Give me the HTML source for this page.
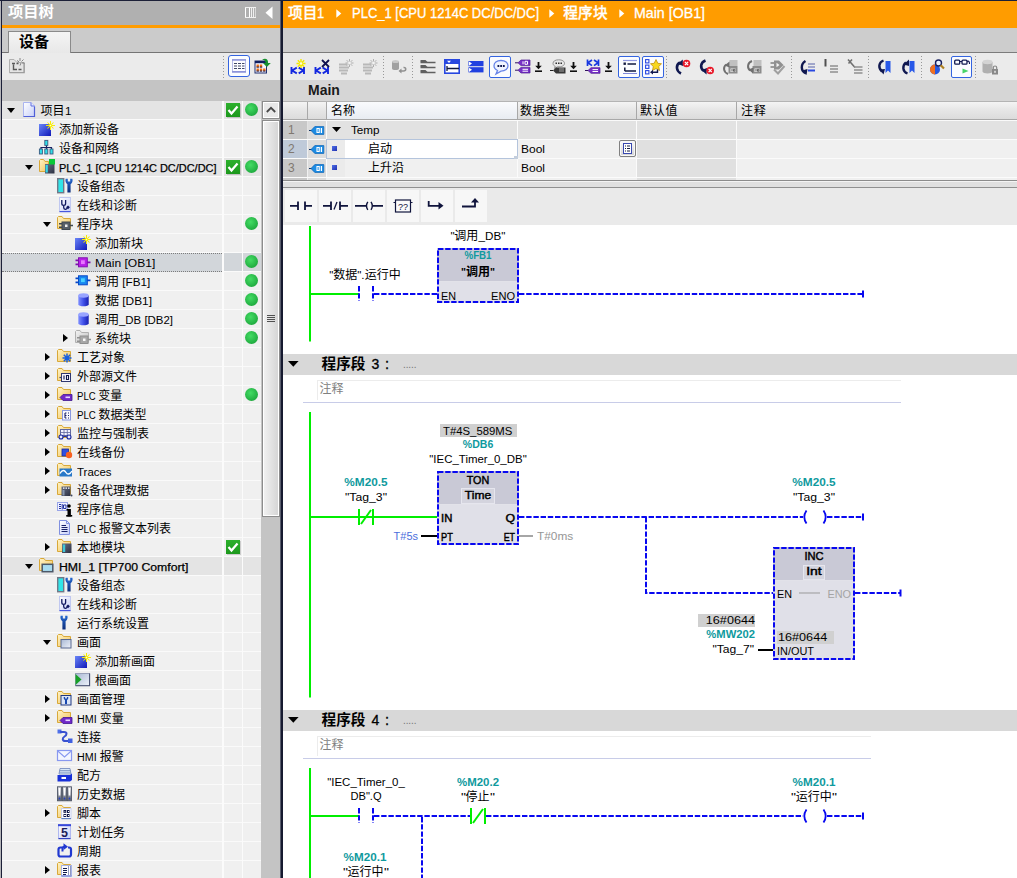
<!DOCTYPE html><html lang="zh"><head><meta charset="utf-8"><title>TIA Portal</title><style>
*{box-sizing:border-box;margin:0;padding:0}
html,body{width:1017px;height:878px;overflow:hidden;background:#fff}
body{position:relative;font-family:"Liberation Sans","Noto Sans CJK SC",sans-serif;font-size:12px;color:#000;line-height:1}
.a{position:absolute}
.t{position:absolute;white-space:nowrap}
.row{position:absolute;left:2px;width:260px;height:19px;border-bottom:1px solid #fafafa;background:#f0f0f0}
.row.dev{background:#e4e4e4}
.row .lbl{position:absolute;top:0.500px;line-height:18px;white-space:nowrap;font-size:12px}
.arr{position:absolute;width:0;height:0}
.arr.d{border-left:4px solid transparent;border-right:4px solid transparent;border-top:5px solid #000}
.arr.r{border-top:4px solid transparent;border-bottom:4px solid transparent;border-left:5px solid #000}
.chk{position:absolute;left:224px;top:2px;width:14px;height:14px;background:linear-gradient(#2cb02c,#1c981c);box-shadow:1px 1px 0 rgba(0,0,0,.15)}
.dot{position:absolute;left:243px;top:2px;width:13px;height:13px;border-radius:50%;background:radial-gradient(circle at 42% 38%,#44dc64,#26b446 60%,#189a34)}
.teal{color:#0f9a9e;font-weight:bold}
.c{transform:translateX(-50%)}
</style></head><body>
<div class="a" style="left:0;top:0;width:283px;height:878px;background:#f0f0f0"></div>
<div class="a" style="left:0;top:0;width:281px;height:25px;background:#b0b0b0"></div>
<div class="a" style="left:0;top:25px;width:281px;height:3px;background:#ff9c00"></div>
<div class="a" style="left:0;top:28px;width:281px;height:25px;background:#cbcbcb;border-bottom:1px solid #747474"></div>
<div class="a" style="left:8px;top:31px;width:63px;height:22px;background:linear-gradient(#f4f4f4,#e8e8e8);border:1px solid #8a8a8a;border-bottom:none"></div>
<div class="t" style="left:19px;top:33px;font-size:15px;font-weight:bold;line-height:18px">设备</div>
<div class="t" style="left:8px;top:3px;font-size:15.300px;font-weight:bold;color:#fff;line-height:18px">项目树</div>
<div class="a" style="left:0;top:53px;width:281px;height:27px;background:#ebebeb"></div>
<div class="a" style="left:0;top:80px;width:281px;height:21px;background:#c4c4c4"></div>
<svg width="0" height="0" style="position:absolute"><defs>
<linearGradient id="gF" x1="0" y1="0" x2="1" y2="1"><stop offset="0" stop-color="#fff4c8"/><stop offset="1" stop-color="#f2c45c"/></linearGradient>
<linearGradient id="gG" x1="0" y1="0" x2="1" y2="1"><stop offset="0" stop-color="#f4f4f4"/><stop offset="1" stop-color="#c0c0c0"/></linearGradient>
<linearGradient id="gB" x1="0" y1="0" x2="1" y2="1"><stop offset="0" stop-color="#6a86f8"/><stop offset="1" stop-color="#1018b8"/></linearGradient>
<linearGradient id="gP" x1="0" y1="0" x2="1" y2="1"><stop offset="0" stop-color="#ffffff"/><stop offset="1" stop-color="#c8d0f8"/></linearGradient>
<linearGradient id="gC" x1="0" y1="0" x2="1" y2="0"><stop offset="0" stop-color="#8090ff"/><stop offset="0.5" stop-color="#4050e8"/><stop offset="1" stop-color="#1820b0"/></linearGradient>
<linearGradient id="gD" x1="0" y1="0" x2="1" y2="1"><stop offset="0" stop-color="#687088"/><stop offset="1" stop-color="#2c3040"/></linearGradient>
<linearGradient id="gW" x1="0" y1="0" x2="0" y2="1"><stop offset="0" stop-color="#2468d0"/><stop offset="1" stop-color="#0c2c78"/></linearGradient>
<linearGradient id="gS" x1="0" y1="0" x2="1" y2="1"><stop offset="0" stop-color="#a8b8d4"/><stop offset="1" stop-color="#eef2fa"/></linearGradient>
<linearGradient id="gH" x1="0" y1="0" x2="0" y2="1"><stop offset="0" stop-color="#d8d8e0"/><stop offset="1" stop-color="#586070"/></linearGradient>
</defs></svg>
<div class="row dev" style="top:101px;">
<i class="arr d" style="left:5px;top:7px"></i>
<span class="a" style="left:21px;top:1px;width:16px;height:16px"><svg width="16" height="16" viewBox="0 0 16 16" style="overflow:visible;display:block"><path d="M0.5 0.5 H8 L11.5 4 V14.5 H0.5 Z" fill="url(#gP)" stroke="#aab4f0" stroke-width="1"/><path d="M0.5 14.5 H11.5 V4.5" fill="none" stroke="#5060d8" stroke-width="1.2"/><path d="M8 0.5 V4 H11.5" fill="#e8ecff" stroke="#6070e0" stroke-width="1"/></svg></span>
<span class="lbl" style="left:38.5px">项目<span style="display:inline-block;width:6.48px;font-size:11.22px"><span style="display:inline-block;white-space:pre;transform:scaleX(1.0375);transform-origin:0 0">1</span></span></span>
<span class="chk"><svg width="14" height="14" viewBox="0 0 14 14"><path d="M2.5 7 L5.5 10.5 L11.5 3.5" fill="none" stroke="#fff" stroke-width="2.2"/></svg></span>
<span class="dot"></span>
</div>
<div class="row" style="top:120px;">
<span class="a" style="left:37px;top:1px;width:16px;height:16px"><svg width="16" height="16" viewBox="0 0 16 16" style="overflow:visible;display:block"><rect x="0" y="3" width="12" height="12" fill="url(#gB)"/><g stroke="#f8ec00" stroke-width="1.05"><path d="M11.5 0 V9 M7 4.5 H16 M8.500 1.500 L14.500 7.500 M14.500 1.500 L8.500 7.500"/></g><circle cx="11.5" cy="4.5" r="0.800" fill="#ffffc0"/></svg></span>
<span class="lbl" style="left:57px">添加新设备</span>
</div>
<div class="row" style="top:139px;">
<span class="a" style="left:37px;top:1px;width:16px;height:16px"><svg width="16" height="16" viewBox="0 0 16 16" style="overflow:visible;display:block"><path d="M7.5 5 V9 M2 9 V7.5 H12.5 V9" fill="none" stroke="#182060" stroke-width="1.2"/><rect x="5.8" y="0.4" width="3" height="5" fill="#30e0e8" stroke="#3a5a80" stroke-width="0.9"/><rect x="0.4" y="9" width="3" height="5" fill="#30e0e8" stroke="#3a5a80" stroke-width="0.9"/><rect x="5.8" y="9" width="3" height="5" fill="#30e0e8" stroke="#3a5a80" stroke-width="0.9"/><rect x="11" y="9" width="3" height="5" fill="#30e0e8" stroke="#3a5a80" stroke-width="0.9"/></svg></span>
<span class="lbl" style="left:57px">设备和网络</span>
</div>
<div class="row dev" style="top:158px;">
<i class="arr d" style="left:23px;top:7px"></i>
<span class="a" style="left:37px;top:1px;width:16px;height:16px"><svg width="16" height="16" viewBox="0 0 16 16" style="overflow:visible;display:block"><path d="M0.5 1.5 L1.5 0.5 H4.5 L6 2.5 H9.5 V12.5 H0.5 Z" fill="url(#gF)" stroke="#d8a838"/><rect x="6" y="5" width="9.5" height="9.5" fill="url(#gD)"/><rect x="6.6" y="6" width="2.2" height="7.5" fill="#38d8e8"/><rect x="10" y="0" width="6" height="5.5" fill="#08c838"/></svg></span>
<span class="lbl" style="left:57px;-webkit-text-stroke:0.250px #000"><span style="display:inline-block;width:157.50px;font-size:11.22px"><span style="display:inline-block;white-space:pre;transform:scaleX(0.9753);transform-origin:0 0">PLC_1 [CPU 1214C DC/DC/DC]</span></span></span>
<span class="chk"><svg width="14" height="14" viewBox="0 0 14 14"><path d="M2.5 7 L5.5 10.5 L11.5 3.5" fill="none" stroke="#fff" stroke-width="2.2"/></svg></span>
<span class="dot"></span>
</div>
<div class="row" style="top:177px;">
<span class="a" style="left:55px;top:1px;width:16px;height:16px"><svg width="16" height="16" viewBox="0 0 16 16" style="overflow:visible;display:block"><rect x="0.700" y="0.700" width="6" height="14" fill="#30e4e8" stroke="#707888" stroke-width="1.400"/><path d="M8.6 0.800 h2.200 v2.600 h2.400 v-2.600 h2.200 c0.600 2.200 -0.200 4.400 -1.800 5.400 V14.600 h-3.200 V6.200 c-1.600 -1 -2.400 -3.200 -1.800 -5.400 Z" fill="url(#gW)"/></svg></span>
<span class="lbl" style="left:75px">设备组态</span>
</div>
<div class="row" style="top:196px;">
<span class="a" style="left:55px;top:1px;width:16px;height:16px"><svg width="16" height="16" viewBox="0 0 16 16" style="overflow:visible;display:block"><rect x="2.500" y="0.500" width="11" height="14" fill="url(#gP)" stroke="#c0c8f0"/><path d="M2.500 14.600 H13.500" stroke="#4858e0" stroke-width="1.200"/><path d="M4.800 3 V6.500 C4.800 9 8.600 9 8.600 6.500 V3 M6.700 8.500 V10.500 C6.700 12.800 9.500 12.800 10.200 11" fill="none" stroke="#101860" stroke-width="1.300"/><path d="M11 8.400 L12.900 10.300 L11 12.200 L9.100 10.300 Z" fill="#101860"/></svg></span>
<span class="lbl" style="left:75px">在线和诊断</span>
</div>
<div class="row" style="top:215px;">
<i class="arr d" style="left:41px;top:7px"></i>
<span class="a" style="left:55px;top:1px;width:16px;height:16px"><svg width="16" height="16" viewBox="0 0 16 16" style="overflow:visible;display:block"><g transform="translate(0,-1)"><path d="M0.5 2.5 L1.5 1.5 H5 L6.5 3.5 H13.5 V13.5 H0.5 Z" fill="url(#gF)" stroke="#d8a838" stroke-width="1"/><path d="M2 8.7 H6 M2 12.3 H6 M12 10.5 H16" stroke="#404850" stroke-width="1.5"/><rect x="5" y="7" width="8" height="7.5" fill="#586068" stroke="#404850"/><rect x="8" y="9.5" width="2.5" height="2.5" fill="#f0f0f0"/></g></svg></span>
<span class="lbl" style="left:75px">程序块</span>
<span class="dot"></span>
</div>
<div class="row" style="top:234px;">
<span class="a" style="left:73px;top:1px;width:16px;height:16px"><svg width="16" height="16" viewBox="0 0 16 16" style="overflow:visible;display:block"><rect x="0" y="3" width="12" height="12" fill="url(#gB)"/><g stroke="#f8ec00" stroke-width="1.05"><path d="M11.5 0 V9 M7 4.5 H16 M8.500 1.500 L14.500 7.500 M14.500 1.500 L8.500 7.500"/></g><circle cx="11.5" cy="4.5" r="0.800" fill="#ffffc0"/></svg></span>
<span class="lbl" style="left:93px">添加新块</span>
</div>
<div class="row" style="top:253px;">
<span class="a" style="left:0;top:0;width:222px;height:19px;background:#d2d6da;border-top:1px dotted #7c7c7c;border-bottom:1px dotted #7c7c7c;border-right:1px dotted #7c7c7c"></span>
<span class="a" style="left:222px;top:0;width:38px;height:18px;background:#d2d6da"></span>
<span class="a" style="left:73px;top:1px;width:16px;height:16px"><svg width="16" height="16" viewBox="0 0 16 16" style="overflow:visible;display:block"><path d="M0.5 6.300 H4 M0.5 10.300 H4 M12 8.300 H15.500" stroke="#8010b0" stroke-width="1.700"/><rect x="3.500" y="3.800" width="8.800" height="9" fill="#b820e8" stroke="#8010b0" stroke-width="1"/><rect x="6" y="6.300" width="3.800" height="3.800" fill="#e878ff"/></svg></span>
<span class="lbl" style="left:93px"><span style="display:inline-block;width:60.30px;font-size:11.22px"><span style="display:inline-block;white-space:pre;transform:scaleX(1.0744);transform-origin:0 0">Main [OB1]</span></span></span>
<span class="dot"></span>
</div>
<div class="row" style="top:272px;">
<span class="a" style="left:73px;top:1px;width:16px;height:16px"><svg width="16" height="16" viewBox="0 0 16 16" style="overflow:visible;display:block"><g transform="translate(0,-1)"><path d="M0.5 6.300 H4 M0.5 10.300 H4 M12 8.300 H15.500" stroke="#0848c8" stroke-width="1.700"/><rect x="3.500" y="3.800" width="8.800" height="9" fill="#1888f0" stroke="#0848c8" stroke-width="1"/><rect x="6" y="6.300" width="3.800" height="3.800" fill="#48d0ff"/></g></svg></span>
<span class="lbl" style="left:93px">调用<span style="display:inline-block;width:31.28px;font-size:11.22px"><span style="display:inline-block;white-space:pre;transform:scaleX(1.0450);transform-origin:0 0"> [FB1]</span></span></span>
<span class="dot"></span>
</div>
<div class="row" style="top:291px;">
<span class="a" style="left:73px;top:1px;width:16px;height:16px"><svg width="16" height="16" viewBox="0 0 16 16" style="overflow:visible;display:block"><path d="M3.300 3.500 V12.300 C3.300 15 13.700 15 13.700 12.300 V3.500 Z" fill="url(#gC)"/><ellipse cx="8.500" cy="3.500" rx="5.200" ry="2.200" fill="#98a4ff"/></svg></span>
<span class="lbl" style="left:93px">数据<span style="display:inline-block;width:32.98px;font-size:11.22px"><span style="display:inline-block;white-space:pre;transform:scaleX(1.0576);transform-origin:0 0"> [DB1]</span></span></span>
<span class="dot"></span>
</div>
<div class="row" style="top:310px;">
<span class="a" style="left:73px;top:1px;width:16px;height:16px"><svg width="16" height="16" viewBox="0 0 16 16" style="overflow:visible;display:block"><path d="M3.300 3.500 V12.300 C3.300 15 13.700 15 13.700 12.300 V3.500 Z" fill="url(#gC)"/><ellipse cx="8.500" cy="3.500" rx="5.200" ry="2.200" fill="#98a4ff"/></svg></span>
<span class="lbl" style="left:93px">调用<span style="display:inline-block;width:53.98px;font-size:11.22px"><span style="display:inline-block;white-space:pre;transform:scaleX(1.0186);transform-origin:0 0">_DB [DB2]</span></span></span>
<span class="dot"></span>
</div>
<div class="row" style="top:329px;">
<i class="arr r" style="left:61px;top:5px"></i>
<span class="a" style="left:73px;top:1px;width:16px;height:16px"><svg width="16" height="16" viewBox="0 0 16 16" style="overflow:visible;display:block"><g transform="translate(0,-1)"><path d="M0.5 2.5 L1.5 1.5 H5 L6.5 3.5 H13.5 V13.5 H0.5 Z" fill="url(#gG)" stroke="#b0b0b0" stroke-width="1"/><path d="M2 8.7 H6 M2 12.3 H6 M12 10.5 H16" stroke="#909090" stroke-width="1.5"/><rect x="5" y="7" width="8" height="7.5" fill="#a8a8a8" stroke="#909090"/><rect x="8" y="9.5" width="2.5" height="2.5" fill="#f8f8f8"/></g></svg></span>
<span class="lbl" style="left:93px">系统块</span>
<span class="dot"></span>
</div>
<div class="row" style="top:348px;">
<i class="arr r" style="left:43px;top:5px"></i>
<span class="a" style="left:55px;top:1px;width:16px;height:16px"><svg width="16" height="16" viewBox="0 0 16 16" style="overflow:visible;display:block"><g transform="translate(0,-1)"><path d="M0.5 2.5 L1.5 1.5 H5 L6.5 3.5 H13.5 V13.5 H0.5 Z" fill="url(#gF)" stroke="#d8a838" stroke-width="1"/><g stroke="#1860e0" stroke-width="1.5"><path d="M10 5.5 V14.5 M5.5 10 H14.5 M6.8 6.8 L13.2 13.2 M13.2 6.8 L6.8 13.2"/></g></g></svg></span>
<span class="lbl" style="left:75px">工艺对象</span>
</div>
<div class="row" style="top:367px;">
<i class="arr r" style="left:43px;top:5px"></i>
<span class="a" style="left:55px;top:1px;width:16px;height:16px"><svg width="16" height="16" viewBox="0 0 16 16" style="overflow:visible;display:block"><g transform="translate(0,-1)"><path d="M0.5 2.5 L1.5 1.5 H5 L6.5 3.5 H13.5 V13.5 H0.5 Z" fill="url(#gF)" stroke="#d8a838" stroke-width="1"/><path d="M2.5 10.5 H5" stroke="#303870" stroke-width="1.2"/><rect x="4.5" y="6.5" width="9" height="8" fill="#f4f4ff" stroke="#303870"/><path d="M7 8.5 V12.5 M9.5 8.5 H11.5 V12.5 H9.5 Z" fill="none" stroke="#101848" stroke-width="1.1"/></g></svg></span>
<span class="lbl" style="left:75px">外部源文件</span>
</div>
<div class="row" style="top:386px;">
<i class="arr r" style="left:43px;top:5px"></i>
<span class="a" style="left:55px;top:1px;width:16px;height:16px"><svg width="16" height="16" viewBox="0 0 16 16" style="overflow:visible;display:block"><g transform="translate(0,-1)"><path d="M0.5 2.5 L1.5 1.5 H5 L6.5 3.5 H13.5 V13.5 H0.5 Z" fill="url(#gF)" stroke="#d8a838" stroke-width="1"/><path d="M3 11.5 L6 8.5 H15 V14.5 H6 Z" fill="#7028c8" stroke="#401890" stroke-width="0.8"/><rect x="8.5" y="10.5" width="4.5" height="1.6" fill="#e8d8ff"/></g></svg></span>
<span class="lbl" style="left:75px"><span style="display:inline-block;width:21.28px;font-size:11.22px"><span style="display:inline-block;white-space:pre;transform:scaleX(0.8530);transform-origin:0 0">PLC </span></span>变量</span>
<span class="dot"></span>
</div>
<div class="row" style="top:405px;">
<i class="arr r" style="left:43px;top:5px"></i>
<span class="a" style="left:55px;top:1px;width:16px;height:16px"><svg width="16" height="16" viewBox="0 0 16 16" style="overflow:visible;display:block"><g transform="translate(0,-1)"><path d="M0.5 2.5 L1.5 1.5 H5 L6.5 3.5 H13.5 V13.5 H0.5 Z" fill="url(#gF)" stroke="#d8a838" stroke-width="1"/><rect x="5.5" y="5.5" width="8" height="9.5" fill="#f8f8ff" stroke="#8898e0"/><path d="M8 8 V13 M8 8 H9.5 M8 10.5 H9.5 M8 13 H9.5 M11 8 H12 M11 10.5 H12 M11 13 H12" stroke="#182068" stroke-width="1.1" fill="none"/></g></svg></span>
<span class="lbl" style="left:75px"><span style="display:inline-block;width:21.58px;font-size:11.22px"><span style="display:inline-block;white-space:pre;transform:scaleX(0.8650);transform-origin:0 0">PLC </span></span>数据类型</span>
</div>
<div class="row" style="top:424px;">
<i class="arr r" style="left:43px;top:5px"></i>
<span class="a" style="left:55px;top:1px;width:16px;height:16px"><svg width="16" height="16" viewBox="0 0 16 16" style="overflow:visible;display:block"><g transform="translate(0,-1)"><path d="M0.5 2.5 L1.5 1.5 H5 L6.5 3.5 H13.5 V13.5 H0.5 Z" fill="url(#gF)" stroke="#d8a838" stroke-width="1"/><rect x="3.5" y="5.5" width="10" height="6" fill="#f4f4ff" stroke="#6068a0"/><path d="M3.5 8.5 H13.5 M7 5.5 V11.5 M10.3 5.5 V11.5" stroke="#6068a0" stroke-width="0.8"/><circle cx="4" cy="13" r="2" fill="#e8ecff" stroke="#1828a0" stroke-width="1.1"/><circle cx="12" cy="13" r="2" fill="#e8ecff" stroke="#1828a0" stroke-width="1.1"/><path d="M6 13 Q8 11.5 10 13" stroke="#1828a0" fill="none"/></g></svg></span>
<span class="lbl" style="left:75px">监控与强制表</span>
</div>
<div class="row" style="top:443px;">
<i class="arr r" style="left:43px;top:5px"></i>
<span class="a" style="left:55px;top:1px;width:16px;height:16px"><svg width="16" height="16" viewBox="0 0 16 16" style="overflow:visible;display:block"><g transform="translate(0,-1)"><path d="M0.5 2.5 L1.5 1.5 H5 L6.5 3.5 H13.5 V13.5 H0.5 Z" fill="url(#gF)" stroke="#d8a838" stroke-width="1"/><rect x="5" y="6" width="6.5" height="7" fill="#3050e0" stroke="#1828a0" stroke-width="0.8"/><circle cx="12" cy="12" r="3.2" fill="#f86020"/></g></svg></span>
<span class="lbl" style="left:75px">在线备份</span>
</div>
<div class="row" style="top:462px;">
<i class="arr r" style="left:43px;top:5px"></i>
<span class="a" style="left:55px;top:1px;width:16px;height:16px"><svg width="16" height="16" viewBox="0 0 16 16" style="overflow:visible;display:block"><g transform="translate(0,-1)"><path d="M0.5 2.5 L1.5 1.5 H5 L6.5 3.5 H13.5 V13.5 H0.5 Z" fill="url(#gF)" stroke="#d8a838" stroke-width="1"/><rect x="2.5" y="6.5" width="12.5" height="8" fill="#2878c8"/><path d="M3 11.5 C5 7.5 7.5 8 9 10.5 S13 12.5 15 9" fill="none" stroke="#fff" stroke-width="1.4"/></g></svg></span>
<span class="lbl" style="left:75px"><span style="display:inline-block;width:34.60px;font-size:11.22px"><span style="display:inline-block;white-space:pre;transform:scaleX(1.0214);transform-origin:0 0">Traces</span></span></span>
</div>
<div class="row" style="top:481px;">
<i class="arr r" style="left:43px;top:5px"></i>
<span class="a" style="left:55px;top:1px;width:16px;height:16px"><svg width="16" height="16" viewBox="0 0 16 16" style="overflow:visible;display:block"><g transform="translate(0,-1)"><path d="M0.5 2.5 L1.5 1.5 H5 L6.5 3.5 H13.5 V13.5 H0.5 Z" fill="url(#gF)" stroke="#d8a838" stroke-width="1"/><rect x="4.5" y="5.5" width="9" height="9.5" fill="url(#gD)"/><path d="M6 7.2 H7.5 M8.5 7.2 H10 M11 7.2 H12.5" stroke="#fff" stroke-width="1.2"/><rect x="5.5" y="9" width="2" height="5.5" fill="#8898b0"/><circle cx="14.5" cy="14.5" r="1" fill="#404860"/></g></svg></span>
<span class="lbl" style="left:75px">设备代理数据</span>
</div>
<div class="row" style="top:500px;">
<span class="a" style="left:55px;top:1px;width:16px;height:16px"><svg width="16" height="16" viewBox="0 0 16 16" style="overflow:visible;display:block"><rect x="0.5" y="1.5" width="10" height="8" fill="#f0f2ff" stroke="#98a4e8"/><path d="M2 3.5 H4 M2 5.5 H4 M2 7.5 H4 M5.2 3 V8.5 M6.5 4 H9 V7.5 H6.5 Z" stroke="#2030a0" stroke-width="1" fill="none"/><rect x="10.5" y="8" width="3.4" height="7.5" fill="#000"/><rect x="9.5" y="8" width="2" height="1.5" fill="#000"/><rect x="9.2" y="14" width="6" height="1.6" fill="#000"/><circle cx="12" cy="5" r="1.8" fill="#000"/></svg></span>
<span class="lbl" style="left:75px">程序信息</span>
</div>
<div class="row" style="top:519px;">
<span class="a" style="left:55px;top:1px;width:16px;height:16px"><svg width="16" height="16" viewBox="0 0 16 16" style="overflow:visible;display:block"><path d="M2.5 0.5 H9.5 L12.5 3.5 V14.5 H2.5 Z" fill="url(#gP)" stroke="#8090e0"/><path d="M9.5 0.5 V3.5 H12.5" fill="none" stroke="#8090e0"/><path d="M4.5 5.5 H9 M4.5 7.5 H10.5 M4.5 9.5 H10.5 M4.5 11.5 H10.5" stroke="#182068" stroke-width="1.1"/></svg></span>
<span class="lbl" style="left:75px"><span style="display:inline-block;width:21.98px;font-size:11.22px"><span style="display:inline-block;white-space:pre;transform:scaleX(0.8810);transform-origin:0 0">PLC </span></span>报警文本列表</span>
</div>
<div class="row" style="top:538px;">
<i class="arr r" style="left:43px;top:5px"></i>
<span class="a" style="left:55px;top:1px;width:16px;height:16px"><svg width="16" height="16" viewBox="0 0 16 16" style="overflow:visible;display:block"><g transform="translate(0,-1)"><path d="M0.5 2.5 L1.5 1.5 H5 L6.5 3.5 H13.5 V13.5 H0.5 Z" fill="url(#gF)" stroke="#d8a838" stroke-width="1"/><rect x="5" y="5.5" width="9.5" height="9.5" fill="url(#gD)"/><rect x="5.8" y="6.5" width="2.4" height="7.5" fill="#40c8d8"/></g></svg></span>
<span class="lbl" style="left:75px">本地模块</span>
<span class="chk"><svg width="14" height="14" viewBox="0 0 14 14"><path d="M2.5 7 L5.5 10.5 L11.5 3.5" fill="none" stroke="#fff" stroke-width="2.2"/></svg></span>
</div>
<div class="row dev" style="top:557px;">
<i class="arr d" style="left:23px;top:7px"></i>
<span class="a" style="left:37px;top:1px;width:16px;height:16px"><svg width="16" height="16" viewBox="0 0 16 16" style="overflow:visible;display:block"><g transform="translate(0,-1)"><path d="M0.500 2.500 L1.500 1.500 H5 L6.500 3.500 H13.500 V13.500 H0.500 Z" fill="url(#gF)" stroke="#d8a838"/><rect x="3.200" y="7.300" width="10.600" height="7.400" fill="#a8dcf0" stroke="#4c5868" stroke-width="1.500"/></g></svg></span>
<span class="lbl" style="left:57px;-webkit-text-stroke:0.250px #000"><span style="display:inline-block;width:129.40px;font-size:11.22px"><span style="display:inline-block;white-space:pre;transform:scaleX(1.0923);transform-origin:0 0">HMI_1 [TP700 Comfort]</span></span></span>
</div>
<div class="row" style="top:576px;">
<span class="a" style="left:55px;top:1px;width:16px;height:16px"><svg width="16" height="16" viewBox="0 0 16 16" style="overflow:visible;display:block"><rect x="0.700" y="0.700" width="6" height="14" fill="#30e4e8" stroke="#707888" stroke-width="1.400"/><path d="M8.6 0.800 h2.200 v2.600 h2.400 v-2.600 h2.200 c0.600 2.200 -0.200 4.400 -1.800 5.400 V14.600 h-3.200 V6.200 c-1.600 -1 -2.400 -3.200 -1.800 -5.400 Z" fill="url(#gW)"/></svg></span>
<span class="lbl" style="left:75px">设备组态</span>
</div>
<div class="row" style="top:595px;">
<span class="a" style="left:55px;top:1px;width:16px;height:16px"><svg width="16" height="16" viewBox="0 0 16 16" style="overflow:visible;display:block"><rect x="2.500" y="0.500" width="11" height="14" fill="url(#gP)" stroke="#c0c8f0"/><path d="M2.500 14.600 H13.500" stroke="#4858e0" stroke-width="1.200"/><path d="M4.800 3 V6.500 C4.800 9 8.600 9 8.600 6.500 V3 M6.700 8.500 V10.500 C6.700 12.800 9.500 12.800 10.200 11" fill="none" stroke="#101860" stroke-width="1.300"/><path d="M11 8.400 L12.900 10.300 L11 12.200 L9.100 10.300 Z" fill="#101860"/></svg></span>
<span class="lbl" style="left:75px">在线和诊断</span>
</div>
<div class="row" style="top:614px;">
<span class="a" style="left:55px;top:1px;width:16px;height:16px"><svg width="16" height="16" viewBox="0 0 16 16" style="overflow:visible;display:block"><path d="M3.6 0.800 h2.200 v2.600 h2.400 v-2.600 h2.200 c0.600 2.200 -0.200 4.400 -1.800 5.400 V14.600 h-3.200 V6.200 c-1.600 -1 -2.400 -3.200 -1.800 -5.400 Z" fill="url(#gW)"/></svg></span>
<span class="lbl" style="left:75px">运行系统设置</span>
</div>
<div class="row" style="top:633px;">
<i class="arr d" style="left:41px;top:7px"></i>
<span class="a" style="left:55px;top:1px;width:16px;height:16px"><svg width="16" height="16" viewBox="0 0 16 16" style="overflow:visible;display:block"><g transform="translate(0,-1)"><path d="M0.5 2.5 L1.5 1.5 H5 L6.5 3.5 H13.5 V13.5 H0.5 Z" fill="url(#gF)" stroke="#d8a838" stroke-width="1"/><rect x="4" y="6.500" width="10" height="8.500" fill="url(#gS)" stroke="#586890" stroke-width="1"/></g></svg></span>
<span class="lbl" style="left:75px">画面</span>
</div>
<div class="row" style="top:652px;">
<span class="a" style="left:73px;top:1px;width:16px;height:16px"><svg width="16" height="16" viewBox="0 0 16 16" style="overflow:visible;display:block"><rect x="0" y="3" width="12" height="12" fill="url(#gB)"/><g stroke="#f8ec00" stroke-width="1.05"><path d="M11.5 0 V9 M7 4.5 H16 M8.500 1.500 L14.500 7.500 M14.500 1.500 L8.500 7.500"/></g><circle cx="11.5" cy="4.5" r="0.800" fill="#ffffc0"/></svg></span>
<span class="lbl" style="left:93px">添加新画面</span>
</div>
<div class="row" style="top:671px;">
<span class="a" style="left:73px;top:1px;width:16px;height:16px"><svg width="16" height="16" viewBox="0 0 16 16" style="overflow:visible;display:block"><rect x="0.500" y="1.500" width="14" height="12" fill="url(#gS)" stroke="#98a0b8"/><path d="M0.500 13.700 H14.600 V1.500" fill="none" stroke="#485070" stroke-width="1.100"/><path d="M0.500 2 V13 L6.500 7.500 Z" fill="#18a028"/></svg></span>
<span class="lbl" style="left:93px">根画面</span>
</div>
<div class="row" style="top:690px;">
<i class="arr r" style="left:43px;top:5px"></i>
<span class="a" style="left:55px;top:1px;width:16px;height:16px"><svg width="16" height="16" viewBox="0 0 16 16" style="overflow:visible;display:block"><g transform="translate(0,-1)"><path d="M0.5 2.5 L1.5 1.5 H5 L6.5 3.5 H13.5 V13.5 H0.5 Z" fill="url(#gF)" stroke="#d8a838" stroke-width="1"/><rect x="4" y="5.500" width="10" height="9.500" fill="#dce6f8" stroke="#203880"/><path d="M6.800 7 h1.300 v1.500 h1.800 v-1.500 h1.300 c0.400 1.400 -0.200 2.500 -1.200 3 V14 h-2 V10 c-1 -0.500 -1.600 -1.600 -1.200 -3 Z" fill="#1848b0"/></g></svg></span>
<span class="lbl" style="left:75px">画面管理</span>
</div>
<div class="row" style="top:709px;">
<i class="arr r" style="left:43px;top:5px"></i>
<span class="a" style="left:55px;top:1px;width:16px;height:16px"><svg width="16" height="16" viewBox="0 0 16 16" style="overflow:visible;display:block"><g transform="translate(0,-1)"><path d="M0.5 2.5 L1.5 1.5 H5 L6.5 3.5 H13.5 V13.5 H0.5 Z" fill="url(#gF)" stroke="#d8a838" stroke-width="1"/><path d="M3 11.5 L6 8.5 H15 V14.5 H6 Z" fill="#7028c8" stroke="#401890" stroke-width="0.8"/><rect x="8.5" y="10.5" width="4.5" height="1.6" fill="#e8d8ff"/></g></svg></span>
<span class="lbl" style="left:75px"><span style="display:inline-block;width:22.68px;font-size:11.22px"><span style="display:inline-block;white-space:pre;transform:scaleX(0.9577);transform-origin:0 0">HMI </span></span>变量</span>
</div>
<div class="row" style="top:728px;">
<span class="a" style="left:55px;top:1px;width:16px;height:16px"><svg width="16" height="16" viewBox="0 0 16 16" style="overflow:visible;display:block"><rect x="0.500" y="0.500" width="4" height="4" fill="#5070e8"/><path d="M3 3 H7 C10.500 3 10 6 7.500 7.500 C5 9 5 12 8.500 12 H12" fill="none" stroke="#3850d0" stroke-width="2"/><rect x="11" y="9.500" width="4.500" height="4.500" fill="#4060e0"/></svg></span>
<span class="lbl" style="left:75px">连接</span>
</div>
<div class="row" style="top:747px;">
<span class="a" style="left:55px;top:1px;width:16px;height:16px"><svg width="16" height="16" viewBox="0 0 16 16" style="overflow:visible;display:block"><rect x="0.5" y="2.5" width="14" height="10" fill="#f4f6ff" stroke="#8898f0" stroke-width="1.2"/><path d="M0.8 3 L7.5 9 L14.2 3" fill="none" stroke="#8898f0" stroke-width="1.1"/></svg></span>
<span class="lbl" style="left:75px"><span style="display:inline-block;width:22.68px;font-size:11.22px"><span style="display:inline-block;white-space:pre;transform:scaleX(0.9577);transform-origin:0 0">HMI </span></span>报警</span>
</div>
<div class="row" style="top:766px;">
<span class="a" style="left:55px;top:1px;width:16px;height:16px"><svg width="16" height="16" viewBox="0 0 16 16" style="overflow:visible;display:block"><path d="M3 1.5 H13 L14 7 H2 Z" fill="#d8e8f8" stroke="#7890c0" stroke-width="0.9"/><path d="M2.5 3.5 H13.5 M2.2 5.2 H13.8" stroke="#7890c0" stroke-width="0.8"/><path d="M0.5 8 H13 L15 6.5 V13 L13 14.5 H0.5 Z" fill="#1830d8"/><rect x="4.5" y="10" width="4.5" height="2" fill="#fff"/></svg></span>
<span class="lbl" style="left:75px">配方</span>
</div>
<div class="row" style="top:785px;">
<span class="a" style="left:55px;top:1px;width:16px;height:16px"><svg width="16" height="16" viewBox="0 0 16 16" style="overflow:visible;display:block"><rect x="0.5" y="0.800" width="4" height="14" fill="url(#gH)" stroke="#505868" stroke-width="0.900"/><rect x="1.7" y="2" width="1.600" height="7.500" fill="#fff"/><circle cx="2.5" cy="12.500" r="0.900" fill="#2840c0"/><rect x="5.5" y="0.800" width="4" height="14" fill="url(#gH)" stroke="#505868" stroke-width="0.900"/><rect x="6.7" y="2" width="1.600" height="7.500" fill="#fff"/><circle cx="7.5" cy="12.500" r="0.900" fill="#2840c0"/><rect x="10.5" y="0.800" width="4" height="14" fill="url(#gH)" stroke="#505868" stroke-width="0.900"/><rect x="11.7" y="2" width="1.600" height="7.500" fill="#fff"/><circle cx="12.5" cy="12.500" r="0.900" fill="#2840c0"/></svg></span>
<span class="lbl" style="left:75px">历史数据</span>
</div>
<div class="row" style="top:804px;">
<i class="arr r" style="left:43px;top:5px"></i>
<span class="a" style="left:55px;top:1px;width:16px;height:16px"><svg width="16" height="16" viewBox="0 0 16 16" style="overflow:visible;display:block"><g transform="translate(0,-1)"><path d="M0.5 2.5 L1.5 1.5 H5 L6.5 3.5 H13.5 V13.5 H0.5 Z" fill="url(#gF)" stroke="#d8a838" stroke-width="1"/><rect x="4.500" y="4.500" width="9.500" height="10" fill="#fcfcff" stroke="#c8d0f0"/><path d="M4.500 14.600 H14" stroke="#6080c0" stroke-width="1.100"/><g fill="none" stroke="#101848" stroke-width="1"><rect x="7" y="6.500" width="1.800" height="1.800"/><rect x="10.500" y="6.500" width="1.500" height="2"/><rect x="7" y="10.500" width="1.800" height="2"/><rect x="10.500" y="10.500" width="1.500" height="2"/></g></g></svg></span>
<span class="lbl" style="left:75px">脚本</span>
</div>
<div class="row" style="top:823px;">
<span class="a" style="left:55px;top:1px;width:16px;height:16px"><svg width="16" height="16" viewBox="0 0 16 16" style="overflow:visible;display:block"><rect x="1.500" y="0.500" width="12" height="14" fill="url(#gP)" stroke="#b0b8f0"/><path d="M1 1.200 H14" stroke="#3848d8" stroke-width="2"/><path d="M1.500 14.600 H13.500" stroke="#3040c0" stroke-width="1.200"/><text x="7.500" y="12.800" font-size="12.500" font-weight="bold" text-anchor="middle" fill="#1c1c58" font-family="Liberation Sans,sans-serif">5</text></svg></span>
<span class="lbl" style="left:75px">计划任务</span>
</div>
<div class="row" style="top:842px;">
<span class="a" style="left:55px;top:1px;width:16px;height:16px"><svg width="16" height="16" viewBox="0 0 16 16" style="overflow:visible;display:block"><path d="M5.500 4.500 H3.500 Q1.500 4.500 1.500 6.500 V11.500 Q1.500 13.500 3.500 13.500 H12 Q14 13.500 14 11.500 V6.500 Q14 4.500 12 4.500 H11" fill="none" stroke="#2038d0" stroke-width="2.200"/><path d="M5.500 8.500 V5.500 Q5.500 3.800 7.500 3.800" fill="none" stroke="#2038d0" stroke-width="2"/><path d="M6.500 0.200 L11 3.800 L6.500 7 Z" fill="#2038d0"/></svg></span>
<span class="lbl" style="left:75px">周期</span>
</div>
<div class="row" style="top:861px;">
<i class="arr r" style="left:43px;top:5px"></i>
<span class="a" style="left:55px;top:1px;width:16px;height:16px"><svg width="16" height="16" viewBox="0 0 16 16" style="overflow:visible;display:block"><g transform="translate(0,-1)"><path d="M0.5 2.5 L1.5 1.5 H5 L6.5 3.5 H13.5 V13.5 H0.5 Z" fill="url(#gF)" stroke="#d8a838" stroke-width="1"/><rect x="4.500" y="4.500" width="10" height="10.500" fill="#fcfcff" stroke="#a8b4e8"/><path d="M4.500 15 H14.500" stroke="#6878d8" stroke-width="1.100"/><path d="M6 7.500 H10 M6 9.500 H10 M6 11.500 H10 M6 13.500 H9" stroke="#101848" stroke-width="1"/><path d="M11.500 5 V14.500 M13.500 5 V14.500" stroke="#9098c0" stroke-width="1"/></g></svg></span>
<span class="lbl" style="left:75px">报表</span>
</div>
<div class="a" style="left:222px;top:101px;width:2px;height:777px;background:#fbfbfb"></div>
<div class="a" style="left:242px;top:101px;width:1px;height:777px;background:#fbfbfb"></div>
<div class="a" style="left:261px;top:101px;width:19px;height:777px;background:#c4c4c4"></div>
<div class="a" style="left:262px;top:101px;width:18px;height:18px;background:#e8e8e8;border:1px solid #8c8c8c;box-shadow:inset 0 0 0 1px #fff"><svg width="16" height="16" viewBox="0 0 16 16" style="display:block"><path d="M3.8 10 L8 5.8 L12.2 10" fill="none" stroke="#484848" stroke-width="1.8"/></svg></div>
<div class="a" style="left:262px;top:120px;width:18px;height:397px;background:linear-gradient(90deg,#f2f2f2,#d4d4d4);border:1px solid #8c8c8c;box-shadow:inset 0 0 0 1px #fff"></div>
<svg class="a" style="left:267px;top:315px" width="8" height="8"><path d="M0 0.500H8M0 2.500H8M0 4.500H8M0 6.500H8" stroke="#505050" stroke-width="1"/></svg>
<svg class="a" style="left:244px;top:6px" width="14" height="13" viewBox="0 0 14 13"><rect x="1.5" y="1.5" width="4" height="10" fill="none" stroke="#fff" stroke-width="1"/><path d="M7.5 1 V12 M9.5 1 V12" stroke="#f0f0f0" stroke-width="1"/><path d="M11.5 1 V12" stroke="#d8d8d8" stroke-width="1"/><path d="M1 1.5 H12 M1 11.5 H12" stroke="#f0f0f0" stroke-width="1"/></svg>
<svg class="a" style="left:265px;top:6px" width="8" height="14" viewBox="0 0 8 14"><path d="M7.5 0.5 V13 L0.5 6.8 Z" fill="#fff"/></svg>
<div class="a" style="left:223px;top:56px;width:1px;height:22px;background:repeating-linear-gradient(#999 0 1px,transparent 1px 3px)"></div>
<div class="a" style="left:228px;top:55px;width:22px;height:22px;background:#fafcff;border:1px solid #3464e0;border-radius:3px"></div>
<svg class="a" style="left:231px;top:58px" width="16" height="16" viewBox="0 0 16 16"><rect x="1.5" y="1.5" width="13" height="12" fill="#fcfcff" stroke="#b8bce8"/><path d="M1 2 H15" stroke="#8890d8" stroke-width="1.4"/><path d="M1 14 H15" stroke="#7078d0" stroke-width="1.2"/><path d="M3 5.5H6M7 5.5H10M11 5.5H13.5M3 8H6M7 8H10M11 8H13.5M3 10.5H6M7 10.5H10M11 10.5H13.5" stroke="#404868" stroke-width="1.1"/></svg>
<svg class="a" style="left:254px;top:57px" width="18" height="17" viewBox="0 0 18 17"><rect x="1" y="4" width="11.5" height="12" fill="#f4f4ff" stroke="#203070"/><rect x="1" y="4" width="11.5" height="2.2" fill="#102060"/><g fill="#f07010"><rect x="2.5" y="7.5" width="2.4" height="2.6"/><rect x="5.8" y="7.5" width="2.4" height="2.6"/><rect x="2.5" y="11.5" width="2.4" height="2.6"/><rect x="5.8" y="11.5" width="2.4" height="2.6"/><rect x="9.1" y="11.5" width="2.4" height="2.6"/></g><g fill="#101040"><rect x="2.5" y="9.6" width="2.4" height="1"/><rect x="5.8" y="9.6" width="2.4" height="1"/><rect x="2.5" y="13.6" width="2.4" height="1"/><rect x="5.8" y="13.6" width="2.4" height="1"/><rect x="9.1" y="13.6" width="2.4" height="1"/></g><path d="M8 2.5 C12 0.5 14.5 2.5 14 6 H16.8 L12.8 10 L9 6 H11.5 C11.8 4 10.5 3 8 2.5 Z" fill="#189030"/></svg>
<svg class="a" style="left:9px;top:58px" width="17" height="16" viewBox="0 0 17 16"><path d="M0.5 1.5 H5 L8 4.5 H15 V14.5 H0.5 Z" fill="#e4e4e4" stroke="#b0b0b0"/><path d="M0.5 14.7 H15.2 V5" fill="none" stroke="#989898" stroke-width="1.1"/><path d="M3 5.5 H6 M4.5 6.5 V11.5 H8 M9.5 11.5 H12.5 M7.5 5.5 H9.5" stroke="#585858" stroke-width="1.4" fill="none"/><path d="M11 0 V3 M8 2.5 L10 3.8 M14.5 1.5 L12.5 3.5 M12 5 L11 7.5 M13 5 H15.5" stroke="#787878" stroke-width="0.9"/></svg>
<div class="a" style="left:0;top:0;width:1px;height:878px;background:#b4b4b8"></div>
<div class="a" style="left:1px;top:0;width:1px;height:878px;background:#1c2038"></div>
<div class="a" style="left:280px;top:0;width:3px;height:878px;background:#161a30;border-left:1px solid #5a5e6e"></div>
<div class="a" style="left:0;top:0;width:1017px;height:1px;background:#1c2038"></div>
<div class="a" style="left:283px;top:1px;width:734px;height:27px;background:#ff9c00"></div>
<div class="t" style="left:288px;top:4px;font-size:14.67px;font-weight:500;color:#fff;line-height:19px;-webkit-text-stroke:0.300px #fff">项目<span style="display:inline-block;width:7.17px;font-size:13.72px"><span style="display:inline-block;white-space:pre;transform:scaleX(0.9387);transform-origin:0 0">1</span></span></div>
<svg class="a" style="left:336px;top:9px" width="6" height="9" viewBox="0 0 6 9"><path d="M0.3 0.3 V8.7 L5.3 4.5 Z" fill="#fff"/></svg>
<div class="t" style="left:351.5px;top:4px;font-size:14.67px;font-weight:500;color:#fff;line-height:19px;-webkit-text-stroke:0.300px #fff"><span style="display:inline-block;width:187.00px;font-size:13.72px"><span style="display:inline-block;white-space:pre;transform:scaleX(0.9470);transform-origin:0 0">PLC_1 [CPU 1214C DC/DC/DC]</span></span></div>
<svg class="a" style="left:549.3px;top:9px" width="6" height="9" viewBox="0 0 6 9"><path d="M0.3 0.3 V8.7 L5.3 4.5 Z" fill="#fff"/></svg>
<div class="t" style="left:563.3px;top:4px;font-size:14.67px;font-weight:500;color:#fff;line-height:19px;-webkit-text-stroke:0.300px #fff"><span style="letter-spacing:0.17px">程序块</span></div>
<svg class="a" style="left:619px;top:9px" width="6" height="9" viewBox="0 0 6 9"><path d="M0.3 0.3 V8.7 L5.3 4.5 Z" fill="#fff"/></svg>
<div class="t" style="left:634px;top:4px;font-size:14.67px;font-weight:500;color:#fff;line-height:19px;-webkit-text-stroke:0.300px #fff"><span style="display:inline-block;width:71.00px;font-size:13.72px"><span style="display:inline-block;white-space:pre;transform:scaleX(1.0346);transform-origin:0 0">Main [OB1]</span></span></div>
<div class="a" style="left:283px;top:28px;width:734px;height:25px;background:#cdcdcd;border-bottom:1px solid #7c7c7c"></div>
<div class="a" style="left:283px;top:53px;width:734px;height:27px;background:#ebebeb"></div>
<svg class="a" style="left:290px;top:59px;overflow:visible" width="17" height="16" viewBox="0 0 17 16"><g stroke="#1428e0" stroke-width="1.900" fill="none"><path d="M1.500 8 V15 M2 11.500 L6.800 8.600 M2 11.500 L6.800 14.400"/><path d="M14 8 V15 M13.500 11.500 L8.700 8.600 M13.500 11.500 L8.700 14.400"/></g><path d="" fill="#1428e0"/><g stroke="#f4e800" stroke-width="1.4"><path d="M11 0 V9 M6.5 4.5 H15.5 M7.8 1.3 L14.2 7.7 M14.2 1.3 L7.8 7.7"/></g><circle cx="11" cy="4.5" r="1.3" fill="#fffce0"/></svg>
<svg class="a" style="left:314px;top:59px;overflow:visible" width="17" height="16" viewBox="0 0 17 16"><g stroke="#1428e0" stroke-width="1.900" fill="none"><path d="M1.500 8 V15 M2 11.500 L6.800 8.600 M2 11.500 L6.800 14.400"/><path d="M14 8 V15 M13.500 11.500 L8.700 8.600 M13.500 11.500 L8.700 14.400"/></g><path d="" fill="#1428e0"/><path d="M8 1 L15 8 M15 1 L8 8" stroke="#101050" stroke-width="1.8"/></svg>
<svg class="a" style="left:338px;top:59px;overflow:visible" width="17" height="16" viewBox="0 0 17 16"><path d="M1 5.5 H9 M1 8.5 H11 M1 11.5 H10 M3 14.5 H9" stroke="#b8b8b8" stroke-width="1.8"/><g stroke="#a8a8a8" stroke-width="0.9"><path d="M11.5 0 V8 M7.5 4 H15.5 M8.7 1.2 L14.3 6.8 M14.3 1.2 L8.7 6.8"/></g><circle cx="11.5" cy="4" r="1.4" fill="#f4f4f4"/></svg>
<svg class="a" style="left:362px;top:59px;overflow:visible" width="17" height="16" viewBox="0 0 17 16"><path d="M1 5.5 H9 M1 8.5 H11 M1 11.5 H10 M3 14.5 H9" stroke="#b8b8b8" stroke-width="1.8"/><g stroke="#a8a8a8" stroke-width="0.9"><path d="M11.5 0 V8 M7.5 4 H15.5 M8.7 1.2 L14.3 6.8 M14.3 1.2 L8.7 6.8"/></g><circle cx="11.5" cy="4" r="1.4" fill="#f4f4f4"/></svg>
<div class="a" style="left:383px;top:56px;width:1px;height:22px;background:repeating-linear-gradient(#999 0 1px,transparent 1px 3px)"></div>
<svg class="a" style="left:390.5px;top:59px;overflow:visible" width="17" height="16" viewBox="0 0 17 16"><path d="M1 2.5 V9.5 C1 11.5 8 11.5 8 9.5 V2.5 Z" fill="#a0a0a0"/><ellipse cx="4.5" cy="2.5" rx="3.5" ry="1.6" fill="#c8c8c8"/><path d="M9 12 H12.5 C15.5 12 15.5 8 12.5 8.5" fill="none" stroke="#909090" stroke-width="1.5"/><path d="M7.5 12 L10.5 9.5 V14.5 Z" fill="#909090"/></svg>
<div class="a" style="left:412px;top:56px;width:1px;height:22px;background:repeating-linear-gradient(#999 0 1px,transparent 1px 3px)"></div>
<svg class="a" style="left:420px;top:59px;overflow:visible" width="17" height="16" viewBox="0 0 17 16"><path d="M0.5 3.5 H15.5 M0.5 8.5 H15.5 M0.5 13.5 H15.5" stroke="#606060" stroke-width="1.6"/><path d="M0.5 1 H5.5 L7.5 3 H0.5 Z M0.5 6 H5.5 L7.5 8 H0.5 Z M0.5 11 H5.5 L7.5 13 H0.5 Z" fill="#606060"/></svg>
<svg class="a" style="left:444px;top:59px;overflow:visible" width="17" height="16" viewBox="0 0 17 16"><rect x="0.8" y="0.8" width="14.4" height="13.4" fill="#fff" stroke="#2848e0" stroke-width="1.6"/><rect x="0.8" y="0.8" width="14.4" height="4.2" fill="#2848e0"/><path d="M3 1.8 H7 L5 4 Z" fill="#fff"/><path d="M3 9.5 H15 M3 7 V12" stroke="#101840" stroke-width="1.3"/></svg>
<svg class="a" style="left:468px;top:59px;overflow:visible" width="17" height="16" viewBox="0 0 17 16"><rect x="0.5" y="2" width="15" height="5.2" fill="#2040e0"/><rect x="0.5" y="8.2" width="15" height="5.2" fill="#2040e0"/><path d="M1 2.5 L4 4.6 L1 6.7 Z M1 8.7 L4 10.8 L1 12.9 Z" fill="#fff"/></svg>
<div class="a" style="left:489px;top:56px;width:22px;height:22px;background:#fbfcff;border:1px solid #3464e0;border-radius:2px"></div>
<svg class="a" style="left:492.5px;top:59px;overflow:visible" width="17" height="16" viewBox="0 0 17 16"><path d="M8 1.5 C3.5 1.5 1 4 1 6.8 C1 9 2.5 10.6 4.5 11.5 L3 15 L8 12.2 C12.5 12.2 15 9.6 15 6.8 C15 4 12.5 1.5 8 1.5 Z" fill="#f0f4ff" stroke="#6884e8" stroke-width="1.3"/><path d="M4.5 7 H6.3 M7.2 7 H9 M9.9 7 H11.7" stroke="#101850" stroke-width="1.8"/></svg>
<svg class="a" style="left:515px;top:59px;overflow:visible" width="17" height="16" viewBox="0 0 17 16"><path d="M3 3.8 l3 -2.8 h9 v5.6 h-9 Z" fill="#7830c8" stroke="#4a1890" stroke-width="0.7"/><path d="M3 3.8 h-3" stroke="#301060" stroke-width="1"/><path d="M3 11.2 l3 -2.8 h9 v5.6 h-9 Z" fill="#7830c8" stroke="#4a1890" stroke-width="0.7"/><path d="M3 11.2 h-3" stroke="#301060" stroke-width="1"/><path d="M8 2.3 V5.3 M10 2.3 H12.5 V5.3 H10 Z" stroke="#fff" stroke-width="1" fill="none"/><path d="M7.5 10.3 H13 M7.5 12.2 H13" stroke="#fff" stroke-width="1"/></svg>
<svg class="a" style="left:535px;top:62px;overflow:visible" width="7" height="16" viewBox="0 0 7 16"><path d="M3.5 0 V5" stroke="#101010" stroke-width="1.8"/><path d="M0.2 3.8 H6.8 L3.5 7.3 Z" fill="#101010"/><path d="M0 9.2 H7" stroke="#101010" stroke-width="1.6"/></svg>
<svg class="a" style="left:550px;top:59px;overflow:visible" width="17" height="16" viewBox="0 0 17 16"><path d="M8.5 0.8 C5 0.8 3 2.4 3 4.4 C3 5.8 4 6.8 5.2 7.3 L4.5 9.5 L7.5 7.8 C12 8.2 14.5 6.4 14.5 4.4 C14.5 2.4 12.5 0.8 8.5 0.8 Z" fill="#e8e8e8" stroke="#909090"/><path d="M5.5 4.3 H7 M8 4.3 H9.5 M10.5 4.3 H12" stroke="#303030" stroke-width="1.5"/><path d="M3 11.5 l3 -3 h9.5 v6 h-9.500 Z" fill="#383838"/><path d="M3 11.5 h-3" stroke="#202020" stroke-width="1"/><path d="M9 10 H14 M9 12 H14" stroke="#b0b0b0" stroke-width="0.9"/></svg>
<svg class="a" style="left:570px;top:62px;overflow:visible" width="7" height="16" viewBox="0 0 7 16"><path d="M3.5 0 V5" stroke="#101010" stroke-width="1.8"/><path d="M0.2 3.8 H6.8 L3.5 7.3 Z" fill="#101010"/><path d="M0 9.2 H7" stroke="#101010" stroke-width="1.6"/></svg>
<svg class="a" style="left:585px;top:59px;overflow:visible" width="17" height="16" viewBox="0 0 17 16"><g stroke="#1838e0" stroke-width="1.700" fill="none"><path d="M2.500 0.500 V7 M3 3.800 L7 1 M3 3.800 L7 6.600"/><path d="M13.500 0.500 V7 M13 3.800 L9 1 M13 3.800 L9 6.600"/></g><path d="M3 11.5 l3 -2.8 h9 v5.6 h-9 Z" fill="#7830c8" stroke="#4a1890" stroke-width="0.7"/><path d="M3 11.5 h-3" stroke="#301060" stroke-width="1"/><path d="M7.500 10.600 H13 M7.500 12.500 H13" stroke="#fff" stroke-width="1"/></svg>
<svg class="a" style="left:605px;top:62px;overflow:visible" width="7" height="16" viewBox="0 0 7 16"><path d="M3.5 0 V5" stroke="#101010" stroke-width="1.8"/><path d="M0.2 3.8 H6.8 L3.5 7.3 Z" fill="#101010"/><path d="M0 9.2 H7" stroke="#101010" stroke-width="1.6"/></svg>
<div class="a" style="left:618px;top:56px;width:22px;height:22px;background:#fbfcff;border:1px solid #3464e0;border-radius:2px"></div>
<svg class="a" style="left:621.5px;top:59px;overflow:visible" width="17" height="16" viewBox="0 0 17 16"><path d="M1 1.5 H15" stroke="#9098e0" stroke-width="1.2"/><path d="M1 14.500 H15" stroke="#8088d8" stroke-width="1"/><rect x="1.500" y="3.500" width="2.4" height="2.400" fill="#101840"/><path d="M5.500 5 H14 M2.800 8.500 V12 M2.800 12 H14" stroke="#101840" stroke-width="1.5" fill="none"/></svg>
<div class="a" style="left:642px;top:56px;width:22px;height:22px;background:#fbfcff;border:1px solid #3464e0;border-radius:2px"></div>
<svg class="a" style="left:645px;top:59px;overflow:visible" width="17" height="16" viewBox="0 0 17 16"><g fill="#fff" stroke="#2848e0" stroke-width="1.1"><rect x="0.6" y="0.6" width="3.3" height="3.3"/><rect x="0.6" y="6.1" width="3.3" height="3.3"/><rect x="0.6" y="11.6" width="3.3" height="3.3"/></g><path d="M11 0.500 L12.800 4.300 L16.500 4.800 L13.700 7.500 L14.500 11.500 L11 9.500 L7.500 11.500 L8.300 7.500 L5.500 4.800 L9.200 4.300 Z" fill="#f8d820" stroke="#c09010" stroke-width="0.800"/><path d="M12.500 10.500 V13.200 H7" fill="none" stroke="#101850" stroke-width="1.4"/><path d="M5 13.200 L8 10.800 V15.600 Z" fill="#101850"/></svg>
<div class="a" style="left:666px;top:56px;width:1px;height:22px;background:repeating-linear-gradient(#999 0 1px,transparent 1px 3px)"></div>
<svg class="a" style="left:673.5px;top:59px;overflow:visible" width="17" height="16" viewBox="0 0 17 16"><path d="M7 14.500 C2 12 1.500 6 6 3.500" fill="none" stroke="#101850" stroke-width="2.600"/><path d="M3.500 4.800 L8.800 0.500 L9 7 Z" fill="#101850"/><circle cx="12.5" cy="4.5" r="3.800" fill="#e81828"/><path d="M10.9 2.9 l3.200 3.200 m0 -3.200 l-3.200 3.200" stroke="#fff" stroke-width="1.300"/></svg>
<svg class="a" style="left:698px;top:59px;overflow:visible" width="17" height="16" viewBox="0 0 17 16"><path d="M7.500 1.500 C2.500 3.500 1.500 9 6 12" fill="none" stroke="#101850" stroke-width="2.600"/><path d="M3.500 11 L9 9 L8.500 15.500 Z" fill="#101850"/><circle cx="12.2" cy="11.5" r="3.800" fill="#e81828"/><path d="M10.6 9.9 l3.200 3.200 m0 -3.200 l-3.200 3.200" stroke="#fff" stroke-width="1.300"/></svg>
<svg class="a" style="left:721.5px;top:59px;overflow:visible" width="17" height="16" viewBox="0 0 17 16"><rect x="7.500" y="1" width="8" height="6" fill="#c0c0c0"/><rect x="6.500" y="7" width="9" height="7.500" fill="#8c8c8c"/><rect x="8.500" y="9.500" width="5" height="3.500" fill="#f0f0f0"/><path d="M10 10 V12.500 M11.500 10.300 h1.300 v2 h-1.300 Z" stroke="#404040" stroke-width="0.800" fill="none"/><path d="M6 15 C1 13 1 7.500 4.500 5.500" fill="none" stroke="#707070" stroke-width="2"/><path d="M2.500 6.500 L7.500 2.500 L7.500 8.500 Z" fill="#707070"/></svg>
<svg class="a" style="left:746px;top:59px;overflow:visible" width="17" height="16" viewBox="0 0 17 16"><rect x="7.500" y="1" width="8" height="6" fill="#c0c0c0"/><rect x="6.500" y="7" width="9" height="7.500" fill="#8c8c8c"/><rect x="8.500" y="9.500" width="5" height="3.500" fill="#f0f0f0"/><path d="M10 10 V12.500 M11.500 10.300 h1.300 v2 h-1.300 Z" stroke="#404040" stroke-width="0.800" fill="none"/><path d="M6 2 C1 4 1 9.500 4.500 11.500" fill="none" stroke="#707070" stroke-width="2"/><path d="M2.500 10.500 L7.500 8.500 L7 14.500 Z" fill="#707070"/></svg>
<svg class="a" style="left:770px;top:59px;overflow:visible" width="17" height="16" viewBox="0 0 17 16"><path d="M0.500 4 H4 M0.500 8 H4" stroke="#808080" stroke-width="1.500"/><path d="M4 1.500 H9 L13.500 6 L9 10.500 H4 Z" fill="#909090"/><path d="M6.500 3.800 L9.500 6 L6.500 8.200 Z" fill="#f4f4f4"/><path d="M4 10.500 L8 14.500 L14.500 7" fill="none" stroke="#a0a0a0" stroke-width="2"/></svg>
<div class="a" style="left:791px;top:56px;width:1px;height:22px;background:repeating-linear-gradient(#999 0 1px,transparent 1px 3px)"></div>
<svg class="a" style="left:799px;top:59px;overflow:visible" width="17" height="16" viewBox="0 0 17 16"><path d="M7 14.500 C1.500 12 1.500 5 6.500 2" fill="none" stroke="#101850" stroke-width="2.400"/><path d="M3 11.500 L8.500 10 L7.500 16 Z" fill="#101850"/><path d="M9 5 H16 M9 8 H16" stroke="#8890c0" stroke-width="1.400"/><path d="M9 11.500 H16" stroke="#2848e0" stroke-width="2"/></svg>
<svg class="a" style="left:824px;top:59px;overflow:visible" width="15" height="16" viewBox="0 0 15 16"><path d="M1.500 0 V7.500" stroke="#505050" stroke-width="2"/><path d="M6 7 H14 M6 10 H14 M6 13 H14" stroke="#909090" stroke-width="1.600"/></svg>
<svg class="a" style="left:847px;top:59px;overflow:visible" width="17" height="16" viewBox="0 0 17 16"><path d="M1 0.500 L8 8.500 M5 0.500 L1.500 4.500" stroke="#707070" stroke-width="1.600"/><path d="M7 8 H15.500 M7 11 H15.500 M7 14 H15.500" stroke="#909090" stroke-width="1.600"/></svg>
<div class="a" style="left:868px;top:56px;width:1px;height:22px;background:repeating-linear-gradient(#999 0 1px,transparent 1px 3px)"></div>
<svg class="a" style="left:877px;top:59px;overflow:visible" width="14" height="16" viewBox="0 0 14 16"><path d="M6.500 1.500 C1.500 3.500 1 9 5 12.500" fill="none" stroke="#101850" stroke-width="2.400"/><path d="M2.500 10.500 L8 10 L6.500 15.500 Z" fill="#101850"/><path d="M8.5 2 h5 v12 l-2.500 -2.500 l-2.500 2.500 Z" fill="#2858e8"/></svg>
<svg class="a" style="left:901px;top:59px;overflow:visible" width="14" height="16" viewBox="0 0 14 16"><path d="M6.500 14.500 C1.500 12.500 1 7 5 3.500" fill="none" stroke="#101850" stroke-width="2.400"/><path d="M2.500 5.500 L8 0.500 L8 7 Z" fill="#101850"/><path d="M8.5 2 h5 v12 l-2.500 -2.500 l-2.500 2.500 Z" fill="#2858e8"/></svg>
<div class="a" style="left:921px;top:56px;width:1px;height:22px;background:repeating-linear-gradient(#999 0 1px,transparent 1px 3px)"></div>
<svg class="a" style="left:929px;top:59px;overflow:visible" width="17" height="16" viewBox="0 0 17 16"><circle cx="6" cy="10.500" r="5" fill="#2858e0"/><path d="M6 5.500 A5 5 0 0 0 6 15.500 Z" fill="#f07020"/><circle cx="9.500" cy="4" r="3" fill="#e8f0ff" stroke="#182060" stroke-width="1.400"/><path d="M11.700 6.200 L15 9.500" stroke="#b08020" stroke-width="2.200"/></svg>
<div class="a" style="left:951px;top:56px;width:21px;height:22px;background:#fbfcff;border:1px solid #3464e0;border-radius:2px"></div>
<svg class="a" style="left:954px;top:59px;overflow:visible" width="17" height="16" viewBox="0 0 17 16"><rect x="0.700" y="1.200" width="5" height="4" rx="1" fill="none" stroke="#101850" stroke-width="1.300"/><rect x="8" y="1.200" width="5" height="4" rx="1" fill="none" stroke="#101850" stroke-width="1.300"/><path d="M5.700 2.500 H8 M13 2.500 C15 1.500 15.500 3 15.500 5" stroke="#101850" fill="none" stroke-width="1.100"/><path d="M8.500 9.500 L14.500 12 L8.500 14.500 Z" fill="#48d468"/></svg>
<div class="a" style="left:974.5px;top:56px;width:1px;height:22px;background:repeating-linear-gradient(#999 0 1px,transparent 1px 3px)"></div>
<svg class="a" style="left:981.5px;top:59px;overflow:visible" width="17" height="16" viewBox="0 0 17 16"><path d="M0.500 3 V12.500 C0.500 15 10.500 15 10.500 12.500 V3 Z" fill="#b0b0b0"/><ellipse cx="5.500" cy="3" rx="5" ry="2.200" fill="#d4d4d4"/><rect x="10" y="10" width="6" height="5.500" fill="#888" /><path d="M11.300 10 V8.500 C11.300 6.500 14.700 6.500 14.700 8.500 V10" fill="none" stroke="#888" stroke-width="1.200"/><rect x="12.300" y="11.800" width="1.400" height="2" fill="#eee"/></svg>
<div class="a" style="left:283px;top:80px;width:734px;height:21px;background:#d6d6d6"></div>
<div class="t" style="left:308px;top:81px;font-size:14px;font-weight:bold;line-height:18px;color:#1a1a1a">Main</div>
<div class="a" style="left:283px;top:101px;width:734px;height:20px;background:linear-gradient(#f4f4f4,#e6e6e6 45%,#dadada);border-top:1px solid #b4b4b4;border-bottom:1px solid #fafafa"></div>
<div class="a" style="left:283px;top:119px;width:734px;height:1px;background:#a8a8a8"></div>
<div class="a" style="left:327px;top:102px;width:190px;height:17px;background:linear-gradient(#fafbfd,#e8ecf2)"></div>
<div class="a" style="left:307px;top:102px;width:1px;height:17px;background:#a8a8a8"></div>
<div class="a" style="left:326px;top:102px;width:1px;height:17px;background:#a8a8a8"></div>
<div class="a" style="left:517px;top:102px;width:1px;height:17px;background:#a8a8a8"></div>
<div class="a" style="left:636px;top:102px;width:1px;height:17px;background:#a8a8a8"></div>
<div class="a" style="left:736px;top:102px;width:1px;height:17px;background:#a8a8a8"></div>
<div class="t" style="left:331px;top:103px;font-size:12px;line-height:17px;letter-spacing:0px">名称</div>
<div class="t" style="left:520px;top:103px;font-size:12px;line-height:17px;letter-spacing:0.700px">数据类型</div>
<div class="t" style="left:640px;top:103px;font-size:12px;line-height:17px;letter-spacing:0.700px">默认值</div>
<div class="t" style="left:741px;top:103px;font-size:12px;line-height:17px;letter-spacing:0.700px">注释</div>
<div class="a" style="left:283px;top:121px;width:734px;height:19px;background:#e2e2e2;border-bottom:1px solid #fbfbfb"></div>
<div class="a" style="left:283px;top:121px;width:24px;height:18px;background:#c8c8c8"></div>
<div class="t" style="left:288px;top:121px;line-height:18px;color:#807870;font-size:12px">1</div>
<div class="a" style="left:308px;top:121px;width:18px;height:18px;background:#dcdcdc"></div>
<svg class="a" style="left:309px;top:126px" width="16" height="9" viewBox="0 0 16 9"><path d="M0 4.500 H3" stroke="#103060" stroke-width="1"/><path d="M2 4.500 L5.800 0.600 H14.800 V8.400 H5.800 Z" fill="#1c8ce4" stroke="#1468b8" stroke-width="0.800"/><path d="M8 2.500 h2.200 v4 h-2.200 Z" fill="none" stroke="#fff" stroke-width="1.100"/><path d="M12.400 2 V7" stroke="#fff" stroke-width="1.300"/></svg>
<div class="a" style="left:326px;top:121px;width:1px;height:19px;background:#fbfbfb"></div>
<div class="a" style="left:517px;top:121px;width:1px;height:19px;background:#fbfbfb"></div>
<div class="a" style="left:636px;top:121px;width:1px;height:19px;background:#fbfbfb"></div>
<div class="a" style="left:736px;top:121px;width:1px;height:19px;background:#fbfbfb"></div>
<svg class="a" style="left:331.500px;top:127px" width="9" height="5" viewBox="0 0 9 5"><path d="M0 0 H9 L4.500 5 Z" fill="#000"/></svg>
<div class="t" style="left:351px;top:121px;line-height:19px;font-size:12px"><span style="display:inline-block;width:28.50px;font-size:11.22px"><span style="display:inline-block;white-space:pre;transform:scaleX(1.0387);transform-origin:0 0">Temp</span></span></div>
<div class="a" style="left:283px;top:140px;width:734px;height:19px;background:#f0f0f0;border-bottom:1px solid #fbfbfb"></div>
<div class="a" style="left:283px;top:140px;width:24px;height:18px;background:#bfcad9"></div>
<div class="t" style="left:288px;top:140px;line-height:18px;color:#807870;font-size:12px">2</div>
<div class="a" style="left:308px;top:140px;width:18px;height:18px;background:#dcdcdc"></div>
<svg class="a" style="left:309px;top:145px" width="16" height="9" viewBox="0 0 16 9"><path d="M0 4.500 H3" stroke="#103060" stroke-width="1"/><path d="M2 4.500 L5.800 0.600 H14.800 V8.400 H5.800 Z" fill="#1c8ce4" stroke="#1468b8" stroke-width="0.800"/><path d="M8 2.500 h2.200 v4 h-2.200 Z" fill="none" stroke="#fff" stroke-width="1.100"/><path d="M12.400 2 V7" stroke="#fff" stroke-width="1.300"/></svg>
<div class="a" style="left:637px;top:140px;width:99px;height:18px;background:#e0e0e0"></div>
<div class="a" style="left:327px;top:140px;width:18px;height:18px;background:#ebebeb"></div>
<div class="a" style="left:326px;top:140px;width:1px;height:19px;background:#fbfbfb"></div>
<div class="a" style="left:517px;top:140px;width:1px;height:19px;background:#fbfbfb"></div>
<div class="a" style="left:636px;top:140px;width:1px;height:19px;background:#fbfbfb"></div>
<div class="a" style="left:736px;top:140px;width:1px;height:19px;background:#fbfbfb"></div>
<div class="a" style="left:326px;top:139px;width:192px;height:20px;border:1px solid #b4c4dc"></div>
<div class="a" style="left:345px;top:140px;width:172px;height:18px;background:#fff"></div>
<div class="a" style="left:514px;top:156px;width:4px;height:4px;background:#c4cedc"></div>
<div class="a" style="left:619px;top:140px;width:17px;height:17px;border:1px solid #808080;border-radius:2px;background:linear-gradient(#fafafa,#d4d4d4);box-shadow:inset 0 0 0 1px #f8f8f8"><svg width="15" height="15" viewBox="0 0 15 15" style="display:block"><rect x="3.500" y="2.500" width="8" height="10" fill="#fff" stroke="#3848b0" stroke-width="1"/><path d="M5 5h1M7 5h3M5 7.500h1M7 7.500h3M5 10h1M7 10h3" stroke="#182040" stroke-width="1"/></svg></div>
<div class="a" style="left:332px;top:146px;width:5px;height:5px;background:linear-gradient(135deg,#5070e8,#2030b0)"></div>
<div class="t" style="left:368px;top:140px;line-height:19px;font-size:12px">启动</div>
<div class="t" style="left:521px;top:140px;line-height:19px;font-size:12px"><span style="display:inline-block;width:24.00px;font-size:11.22px"><span style="display:inline-block;white-space:pre;transform:scaleX(1.0682);transform-origin:0 0">Bool</span></span></div>
<div class="a" style="left:283px;top:159px;width:734px;height:19px;background:#f0f0f0;border-bottom:1px solid #fbfbfb"></div>
<div class="a" style="left:283px;top:159px;width:24px;height:18px;background:#c8c8c8"></div>
<div class="t" style="left:288px;top:159px;line-height:18px;color:#807870;font-size:12px">3</div>
<div class="a" style="left:308px;top:159px;width:18px;height:18px;background:#dcdcdc"></div>
<svg class="a" style="left:309px;top:164px" width="16" height="9" viewBox="0 0 16 9"><path d="M0 4.500 H3" stroke="#103060" stroke-width="1"/><path d="M2 4.500 L5.800 0.600 H14.800 V8.400 H5.800 Z" fill="#1c8ce4" stroke="#1468b8" stroke-width="0.800"/><path d="M8 2.500 h2.200 v4 h-2.200 Z" fill="none" stroke="#fff" stroke-width="1.100"/><path d="M12.400 2 V7" stroke="#fff" stroke-width="1.300"/></svg>
<div class="a" style="left:637px;top:159px;width:99px;height:18px;background:#e0e0e0"></div>
<div class="a" style="left:327px;top:159px;width:18px;height:18px;background:#ebebeb"></div>
<div class="a" style="left:326px;top:159px;width:1px;height:19px;background:#fbfbfb"></div>
<div class="a" style="left:517px;top:159px;width:1px;height:19px;background:#fbfbfb"></div>
<div class="a" style="left:636px;top:159px;width:1px;height:19px;background:#fbfbfb"></div>
<div class="a" style="left:736px;top:159px;width:1px;height:19px;background:#fbfbfb"></div>
<div class="a" style="left:332px;top:165px;width:5px;height:5px;background:linear-gradient(135deg,#5070e8,#2030b0)"></div>
<div class="t" style="left:368px;top:159px;line-height:19px;font-size:12px">上升沿</div>
<div class="t" style="left:521px;top:159px;line-height:19px;font-size:12px"><span style="display:inline-block;width:24.00px;font-size:11.22px"><span style="display:inline-block;white-space:pre;transform:scaleX(1.0682);transform-origin:0 0">Bool</span></span></div>
<div class="a" style="left:283px;top:178px;width:734px;height:2px;background:#f0f0f0"></div>
<div class="a" style="left:308px;top:178px;width:18px;height:2px;background:#dcdcdc"></div>
<div class="a" style="left:283px;top:178px;width:24px;height:2px;background:#c8c8c8"></div>
<div class="a" style="left:637px;top:178px;width:99px;height:2px;background:#e0e0e0"></div>
<div class="a" style="left:283px;top:180px;width:734px;height:8px;background:#e0e0e0;border-top:1px solid #8c8c8c;border-bottom:1px solid #909090;box-shadow:inset 0 1px 0 #f4f4f4"></div>
<div class="a" style="left:283px;top:188px;width:734px;height:37px;background:#eaeaea"></div>
<div class="a" style="left:285px;top:190px;width:32px;height:32px;background:#f7f7f7"></div>
<div class="a" style="left:319px;top:190px;width:32px;height:32px;background:#f7f7f7"></div>
<div class="a" style="left:353px;top:190px;width:32px;height:32px;background:#f7f7f7"></div>
<div class="a" style="left:387px;top:190px;width:32px;height:32px;background:#f7f7f7"></div>
<div class="a" style="left:421px;top:190px;width:32px;height:32px;background:#f7f7f7"></div>
<div class="a" style="left:455px;top:190px;width:32px;height:32px;background:#f7f7f7"></div>
<svg class="a" style="left:283px;top:188px" width="210" height="37" viewBox="283 188 210 37"><g stroke="#10143c" stroke-width="1.800" fill="none"><path d="M290 205.800 H298 M298 201.500 V210 M305 201.500 V210 M305 205.800 H312"/><path d="M323 205.800 H331 M331 201.500 V210 M340 201.500 V210 M340 205.800 H348"/><path d="M334 209.500 L337 202" stroke-width="1.300"/><path d="M355 205.800 H366 M372.500 205.800 H383"/><path d="M367.800 201.800 q-2.600 4 0 8 M371 201.800 q2.600 4 0 8" stroke-width="1.400"/><rect x="395.500" y="200" width="15" height="12" stroke-width="1.200" fill="#fafafa"/><path d="M393.500 202.500 H395.500 M410.500 202.500 H412.500" stroke-width="1.200"/><path d="M428.700 201 V205.800 H440"/><path d="M438.500 202 L443.500 205.800 L438.500 209.600 Z" fill="#10143c" stroke="none"/><path d="M462 206.500 H475 V201"/><path d="M471 202.500 L475 198 L479 202.500 Z" fill="#10143c" stroke="none"/></g><text x="403" y="209.500" font-size="9" text-anchor="middle" fill="#10143c" font-family="Liberation Sans,sans-serif">??</text></svg>
<div class="a" style="left:283px;top:225px;width:734px;height:653px;background:#fff"></div>
<div class="a" style="left:283px;top:354px;width:734px;height:21px;background:#d8d8d8"></div>
<svg class="a" style="left:287.500px;top:361px" width="11" height="6" viewBox="0 0 11 6"><path d="M0 0 H10.600 L5.300 5.800 Z" fill="#000"/></svg>
<div class="t" style="left:321.500px;top:354px;font-size:14.670px;font-weight:bold;line-height:20px">程序段<span style="position:absolute;left:50px;top:0;font-size:14px;font-weight:normal;-webkit-text-stroke:0.300px #000">3</span><span style="position:absolute;left:63.500px;top:-0.500px;font-weight:normal;-webkit-text-stroke:0.300px #000">:</span></div>
<div class="t" style="left:403px;top:355px;font-size:10px;color:#767676;line-height:20px;letter-spacing:-0.100px">.....</div>
<div class="a" style="left:317px;top:380px;width:584px;height:20px;border-top:1px solid #ececec;border-left:1px solid #ececec"></div>
<div class="t" style="left:319.500px;top:380px;font-size:12px;color:#808080;line-height:18px">注释</div>
<div class="a" style="left:303px;top:402px;width:598px;height:1px;background:#c8cce8"></div>
<div class="a" style="left:283px;top:710px;width:734px;height:21px;background:#d8d8d8"></div>
<svg class="a" style="left:287.500px;top:717px" width="11" height="6" viewBox="0 0 11 6"><path d="M0 0 H10.600 L5.300 5.800 Z" fill="#000"/></svg>
<div class="t" style="left:321.500px;top:710px;font-size:14.670px;font-weight:bold;line-height:20px">程序段<span style="position:absolute;left:50px;top:0;font-size:14px;font-weight:normal;-webkit-text-stroke:0.300px #000">4</span><span style="position:absolute;left:63.500px;top:-0.500px;font-weight:normal;-webkit-text-stroke:0.300px #000">:</span></div>
<div class="t" style="left:403px;top:711px;font-size:10px;color:#767676;line-height:20px;letter-spacing:-0.100px">.....</div>
<div class="a" style="left:317px;top:736px;width:554px;height:20px;border-top:1px solid #ececec;border-left:1px solid #ececec"></div>
<div class="t" style="left:319.500px;top:736px;font-size:12px;color:#808080;line-height:18px">注释</div>
<div class="a" style="left:303px;top:758px;width:568px;height:1px;background:#c8cce8"></div>
<svg class="a" style="left:0;top:0" width="1017" height="878" viewBox="0 0 1017 878"><path d="M310 226 L310 341.5" stroke="#00ee00" stroke-width="2" fill="none"/><path d="M311 294 L359 294" stroke="#00ee00" stroke-width="2" fill="none"/><path d="M359 286 V301" stroke="#0808f0" stroke-width="2" fill="none" stroke-dasharray="5.4 1.8" stroke-dashoffset="0"/><path d="M373 286 V301" stroke="#0808f0" stroke-width="2" fill="none" stroke-dasharray="5.4 1.8" stroke-dashoffset="0"/><path d="M374 294 H437" stroke="#0808f0" stroke-width="2" fill="none" stroke-dasharray="5.4 1.8" stroke-dashoffset="0"/><rect x="437" y="248" width="82" height="33.5" fill="#c9c9d6"/><rect x="437" y="281.5" width="82" height="21.5" fill="#e0e0e8"/><rect x="438" y="249" width="80" height="53" fill="none" stroke="#0808f0" stroke-width="2" stroke-dasharray="5.4 1.8"/><path d="M519 294 H863" stroke="#0808f0" stroke-width="2" fill="none" stroke-dasharray="5.4 1.8" stroke-dashoffset="0"/><path d="M863 290.500 V297.500" stroke="#0808f0" stroke-width="2" fill="none"/><path d="M310 412 L310 697.5" stroke="#00ee00" stroke-width="2" fill="none"/><path d="M311 517 L437 517" stroke="#00ee00" stroke-width="2" fill="none"/><path d="M359 509 L359 525" stroke="#00ee00" stroke-width="2" fill="none"/><path d="M373 509 L373 525" stroke="#00ee00" stroke-width="2" fill="none"/><path d="M361 524 L371 510" stroke="#00ee00" stroke-width="2" fill="none"/><rect x="437" y="471" width="82" height="33.5" fill="#c9c9d6"/><rect x="437" y="504.5" width="82" height="40.5" fill="#e0e0e8"/><rect x="438" y="472" width="80" height="72" fill="none" stroke="#0808f0" stroke-width="2" stroke-dasharray="5.4 1.8"/><path d="M519 517 H803" stroke="#0808f0" stroke-width="2" fill="none" stroke-dasharray="5.4 1.8" stroke-dashoffset="0"/><path d="M646 517 V593 H773" stroke="#0808f0" stroke-width="2" fill="none" stroke-dasharray="5.4 1.8" stroke-dashoffset="0"/><rect x="773" y="547" width="82" height="33.5" fill="#c9c9d6"/><rect x="773" y="580.5" width="82" height="79.5" fill="#e0e0e8"/><rect x="774" y="548" width="80" height="111" fill="none" stroke="#0808f0" stroke-width="2" stroke-dasharray="5.4 1.8"/><path d="M855 593 H900.5" stroke="#0808f0" stroke-width="2" fill="none" stroke-dasharray="5.4 1.8" stroke-dashoffset="0"/><path d="M900.500 589.500 V596.500" stroke="#0808f0" stroke-width="2" fill="none"/><path d="M806.5 510.5 q-4.4 6.5 0 13" stroke="#0808f0" stroke-width="1.8" fill="none"/><path d="M823.5 510.5 q4.4 6.5 0 13" stroke="#0808f0" stroke-width="1.8" fill="none"/><path d="M827 517 H863" stroke="#0808f0" stroke-width="2" fill="none" stroke-dasharray="5.4 1.8" stroke-dashoffset="0"/><path d="M863 513.500 V520.500" stroke="#0808f0" stroke-width="2" fill="none"/><path d="M421 536 H437" stroke="#000" stroke-width="2" fill="none"/><path d="M519 536 H533" stroke="#888" stroke-width="1.5" fill="none"/><path d="M758 650 H773" stroke="#000" stroke-width="2" fill="none"/><path d="M799 593 H820" stroke="#999" stroke-width="1" fill="none"/><rect x="461.5" y="488.5" width="33" height="15" fill="#d4d4de" stroke="#e6e6ee"/><rect x="803.5" y="565.5" width="21" height="14" fill="#d4d4de" stroke="#e6e6ee"/><rect x="440" y="424" width="77" height="13" fill="#d0d0d0"/><rect x="698" y="614" width="57" height="13" fill="#d0d0d0"/><rect x="777" y="631" width="57" height="13" fill="#d0d0d0"/><path d="M310 768 L310 878" stroke="#00ee00" stroke-width="2" fill="none"/><path d="M311 816 L359 816" stroke="#00ee00" stroke-width="2" fill="none"/><path d="M359 808 V823" stroke="#0808f0" stroke-width="2" fill="none" stroke-dasharray="5.4 1.8" stroke-dashoffset="0"/><path d="M373 808 V823" stroke="#0808f0" stroke-width="2" fill="none" stroke-dasharray="5.4 1.8" stroke-dashoffset="0"/><path d="M374 816 H470" stroke="#0808f0" stroke-width="2" fill="none" stroke-dasharray="5.4 1.8" stroke-dashoffset="0"/><path d="M471 808 L471 824" stroke="#00ee00" stroke-width="2" fill="none"/><path d="M485 808 L485 824" stroke="#00ee00" stroke-width="2" fill="none"/><path d="M473 823 L483 809" stroke="#00ee00" stroke-width="2" fill="none"/><path d="M486 816 H803" stroke="#0808f0" stroke-width="2" fill="none" stroke-dasharray="5.4 1.8" stroke-dashoffset="0"/><path d="M806.5 809.5 q-4.4 6.5 0 13" stroke="#0808f0" stroke-width="1.8" fill="none"/><path d="M823.5 809.5 q4.4 6.5 0 13" stroke="#0808f0" stroke-width="1.8" fill="none"/><path d="M827 816 H863" stroke="#0808f0" stroke-width="2" fill="none" stroke-dasharray="5.4 1.8" stroke-dashoffset="0"/><path d="M863 812.500 V819.500" stroke="#0808f0" stroke-width="2" fill="none"/><path d="M422 817 V878" stroke="#0808f0" stroke-width="2" fill="none" stroke-dasharray="5.4 1.8" stroke-dashoffset="0"/></svg>
<div class="t " style="left:477.5px;top:236px;transform:translate(-50%,-50%);font-size:12px;line-height:14px;"><span style="display:inline-block;width:4.14px;font-size:11.22px"><span style="display:inline-block;white-space:pre;transform:scaleX(1.0399);transform-origin:0 0">"</span></span>调用<span style="display:inline-block;width:26.84px;font-size:11.22px"><span style="display:inline-block;white-space:pre;transform:scaleX(1.0399);transform-origin:0 0">_DB"</span></span></div>
<div class="t teal" style="left:478px;top:255px;transform:translate(-50%,-50%);font-size:12px;line-height:14px;;font-weight:bold"><span style="display:inline-block;width:27.00px;font-size:11.22px"><span style="display:inline-block;white-space:pre;transform:scaleX(0.8662);transform-origin:0 0">%FB1</span></span></div>
<div class="t " style="left:478px;top:271.5px;transform:translate(-50%,-50%);font-size:12px;line-height:14px;;font-weight:bold"><span style="display:inline-block;width:4.99px;font-size:11.22px"><span style="display:inline-block;white-space:pre;transform:scaleX(0.9370);transform-origin:0 0">"</span></span>调用<span style="display:inline-block;width:4.99px;font-size:11.22px"><span style="display:inline-block;white-space:pre;transform:scaleX(0.9370);transform-origin:0 0">"</span></span></div>
<div class="t " style="left:441px;top:295.5px;transform:translate(0,-50%);font-size:12px;line-height:14px;"><span style="display:inline-block;width:15.00px;font-size:11.22px"><span style="display:inline-block;white-space:pre;transform:scaleX(0.9619);transform-origin:0 0">EN</span></span></div>
<div class="t " style="left:515px;top:295.5px;transform:translate(-100%,-50%);font-size:12px;line-height:14px;"><span style="display:inline-block;width:24.00px;font-size:11.22px"><span style="display:inline-block;white-space:pre;transform:scaleX(0.9871);transform-origin:0 0">ENO</span></span></div>
<div class="t " style="left:365px;top:274.5px;transform:translate(-50%,-50%);font-size:12px;line-height:14px;"><span style="display:inline-block;width:4.12px;font-size:11.22px"><span style="display:inline-block;white-space:pre;transform:scaleX(1.0338);transform-origin:0 0">"</span></span>数据<span style="display:inline-block;width:7.35px;font-size:11.22px"><span style="display:inline-block;white-space:pre;transform:scaleX(1.0338);transform-origin:0 0">".</span></span>运行中</div>
<div class="t " style="left:442.5px;top:430.5px;transform:translate(0,-50%);font-size:12px;line-height:14px;"><span style="display:inline-block;width:69.30px;font-size:11.22px"><span style="display:inline-block;white-space:pre;transform:scaleX(1.0101);transform-origin:0 0">T#4S_589MS</span></span></div>
<div class="t teal" style="left:477.5px;top:444px;transform:translate(-50%,-50%);font-size:12px;line-height:14px;;font-weight:bold"><span style="display:inline-block;width:30.50px;font-size:11.22px"><span style="display:inline-block;white-space:pre;transform:scaleX(0.9407);transform-origin:0 0">%DB6</span></span></div>
<div class="t " style="left:477.5px;top:459px;transform:translate(-50%,-50%);font-size:12px;line-height:14px;"><span style="display:inline-block;width:97.40px;font-size:11.22px"><span style="display:inline-block;white-space:pre;transform:scaleX(1.0202);transform-origin:0 0">"IEC_Timer_0_DB"</span></span></div>
<div class="t " style="left:478px;top:480px;transform:translate(-50%,-50%);font-size:12px;line-height:14px;;-webkit-text-stroke:0.450px #000"><span style="display:inline-block;width:22.60px;font-size:11.22px"><span style="display:inline-block;white-space:pre;transform:scaleX(0.9623);transform-origin:0 0">TON</span></span></div>
<div class="t " style="left:478px;top:495px;transform:translate(-50%,-50%);font-size:12px;line-height:14px;;-webkit-text-stroke:0.450px #000"><span style="display:inline-block;width:26.30px;font-size:11.22px"><span style="display:inline-block;white-space:pre;transform:scaleX(1.0728);transform-origin:0 0">Time</span></span></div>
<div class="t " style="left:441px;top:518px;transform:translate(0,-50%);font-size:12px;line-height:14px;;-webkit-text-stroke:0.450px #000"><span style="display:inline-block;width:11.30px;font-size:11.22px"><span style="display:inline-block;white-space:pre;transform:scaleX(1.0072);transform-origin:0 0">IN</span></span></div>
<div class="t " style="left:515px;top:518px;transform:translate(-100%,-50%);font-size:12px;line-height:14px;;-webkit-text-stroke:0.450px #000"><span style="display:inline-block;width:9.60px;font-size:11.22px"><span style="display:inline-block;white-space:pre;transform:scaleX(1.0991);transform-origin:0 0">Q</span></span></div>
<div class="t " style="left:441px;top:536.5px;transform:translate(0,-50%);font-size:12px;line-height:14px;;-webkit-text-stroke:0.450px #000"><span style="display:inline-block;width:11.80px;font-size:11.22px"><span style="display:inline-block;white-space:pre;transform:scaleX(0.8227);transform-origin:0 0">PT</span></span></div>
<div class="t " style="left:515px;top:536.5px;transform:translate(-100%,-50%);font-size:12px;line-height:14px;;-webkit-text-stroke:0.450px #000"><span style="display:inline-block;width:11.30px;font-size:11.22px"><span style="display:inline-block;white-space:pre;transform:scaleX(0.7878);transform-origin:0 0">ET</span></span></div>
<div class="t teal" style="left:365.5px;top:482px;transform:translate(-50%,-50%);font-size:12px;line-height:14px;;font-weight:bold"><span style="display:inline-block;width:43.30px;font-size:11.22px"><span style="display:inline-block;white-space:pre;transform:scaleX(1.0521);transform-origin:0 0">%M20.5</span></span></div>
<div class="t " style="left:365.5px;top:497px;transform:translate(-50%,-50%);font-size:12px;line-height:14px;"><span style="display:inline-block;width:42.00px;font-size:11.22px"><span style="display:inline-block;white-space:pre;transform:scaleX(1.0896);transform-origin:0 0">"Tag_3"</span></span></div>
<div class="t " style="left:417.8px;top:535.5px;transform:translate(-100%,-50%);font-size:12px;line-height:14px;color:#4a6edc"><span style="display:inline-block;width:24.40px;font-size:11.22px"><span style="display:inline-block;white-space:pre;transform:scaleX(0.9778);transform-origin:0 0">T#5s</span></span></div>
<div class="t " style="left:537.2px;top:535.5px;transform:translate(0,-50%);font-size:12px;line-height:14px;color:#969696"><span style="display:inline-block;width:36.20px;font-size:11.22px"><span style="display:inline-block;white-space:pre;transform:scaleX(1.0555);transform-origin:0 0">T#0ms</span></span></div>
<div class="t teal" style="left:813.7px;top:482px;transform:translate(-50%,-50%);font-size:12px;line-height:14px;;font-weight:bold"><span style="display:inline-block;width:43.30px;font-size:11.22px"><span style="display:inline-block;white-space:pre;transform:scaleX(1.0521);transform-origin:0 0">%M20.5</span></span></div>
<div class="t " style="left:813.7px;top:497px;transform:translate(-50%,-50%);font-size:12px;line-height:14px;"><span style="display:inline-block;width:42.00px;font-size:11.22px"><span style="display:inline-block;white-space:pre;transform:scaleX(1.0896);transform-origin:0 0">"Tag_3"</span></span></div>
<div class="t " style="left:814px;top:556px;transform:translate(-50%,-50%);font-size:12px;line-height:14px;;-webkit-text-stroke:0.450px #000"><span style="display:inline-block;width:19.20px;font-size:11.22px"><span style="display:inline-block;white-space:pre;transform:scaleX(0.9934);transform-origin:0 0">INC</span></span></div>
<div class="t " style="left:814px;top:570.5px;transform:translate(-50%,-50%);font-size:12px;line-height:14px;;-webkit-text-stroke:0.450px #000"><span style="display:inline-block;width:15.50px;font-size:11.22px"><span style="display:inline-block;white-space:pre;transform:scaleX(1.2416);transform-origin:0 0">Int</span></span></div>
<div class="t " style="left:777.3px;top:594px;transform:translate(0,-50%);font-size:12px;line-height:14px;"><span style="display:inline-block;width:15.00px;font-size:11.22px"><span style="display:inline-block;white-space:pre;transform:scaleX(0.9619);transform-origin:0 0">EN</span></span></div>
<div class="t " style="left:850.5px;top:594px;transform:translate(-100%,-50%);font-size:12px;line-height:14px;color:#a4a4a4"><span style="display:inline-block;width:23.60px;font-size:11.22px"><span style="display:inline-block;white-space:pre;transform:scaleX(0.9707);transform-origin:0 0">ENO</span></span></div>
<div class="t " style="left:754.8px;top:620px;transform:translate(-100%,-50%);font-size:12px;line-height:14px;"><span style="display:inline-block;width:49.20px;font-size:11.22px"><span style="display:inline-block;white-space:pre;transform:scaleX(1.1262);transform-origin:0 0">16#0644</span></span></div>
<div class="t teal" style="left:754.8px;top:634px;transform:translate(-100%,-50%);font-size:12px;line-height:14px;;font-weight:bold"><span style="display:inline-block;width:48.70px;font-size:11.22px"><span style="display:inline-block;white-space:pre;transform:scaleX(1.0012);transform-origin:0 0">%MW202</span></span></div>
<div class="t " style="left:754.3px;top:649px;transform:translate(-100%,-50%);font-size:12px;line-height:14px;"><span style="display:inline-block;width:41.60px;font-size:11.22px"><span style="display:inline-block;white-space:pre;transform:scaleX(1.0792);transform-origin:0 0">"Tag_7"</span></span></div>
<div class="t " style="left:777.8px;top:637px;transform:translate(0,-50%);font-size:12px;line-height:14px;"><span style="display:inline-block;width:49.20px;font-size:11.22px"><span style="display:inline-block;white-space:pre;transform:scaleX(1.1262);transform-origin:0 0">16#0644</span></span></div>
<div class="t " style="left:777.3px;top:651px;transform:translate(0,-50%);font-size:12px;line-height:14px;"><span style="display:inline-block;width:37.00px;font-size:11.22px"><span style="display:inline-block;white-space:pre;transform:scaleX(0.9729);transform-origin:0 0">IN/OUT</span></span></div>
<div class="t " style="left:365.5px;top:781.5px;transform:translate(-50%,-50%);font-size:12px;line-height:14px;"><span style="display:inline-block;width:77.70px;font-size:11.22px"><span style="display:inline-block;white-space:pre;transform:scaleX(1.0236);transform-origin:0 0">"IEC_Timer_0_</span></span></div>
<div class="t " style="left:365.5px;top:795.5px;transform:translate(-50%,-50%);font-size:12px;line-height:14px;"><span style="display:inline-block;width:31.20px;font-size:11.22px"><span style="display:inline-block;white-space:pre;transform:scaleX(0.9929);transform-origin:0 0">DB".Q</span></span></div>
<div class="t teal" style="left:477.5px;top:781.5px;transform:translate(-50%,-50%);font-size:12px;line-height:14px;;font-weight:bold"><span style="display:inline-block;width:42.00px;font-size:11.22px"><span style="display:inline-block;white-space:pre;transform:scaleX(1.0205);transform-origin:0 0">%M20.2</span></span></div>
<div class="t " style="left:477.5px;top:797px;transform:translate(-50%,-50%);font-size:12px;line-height:14px;"><span style="display:inline-block;width:4.99px;font-size:11.22px"><span style="display:inline-block;white-space:pre;transform:scaleX(1.2529);transform-origin:0 0">"</span></span>停止<span style="display:inline-block;width:4.99px;font-size:11.22px"><span style="display:inline-block;white-space:pre;transform:scaleX(1.2529);transform-origin:0 0">"</span></span></div>
<div class="t teal" style="left:813.7px;top:781.5px;transform:translate(-50%,-50%);font-size:12px;line-height:14px;;font-weight:bold"><span style="display:inline-block;width:42.80px;font-size:11.22px"><span style="display:inline-block;white-space:pre;transform:scaleX(1.0399);transform-origin:0 0">%M20.1</span></span></div>
<div class="t " style="left:813.7px;top:797px;transform:translate(-50%,-50%);font-size:12px;line-height:14px;"><span style="display:inline-block;width:4.99px;font-size:11.22px"><span style="display:inline-block;white-space:pre;transform:scaleX(1.2529);transform-origin:0 0">"</span></span>运行中<span style="display:inline-block;width:4.99px;font-size:11.22px"><span style="display:inline-block;white-space:pre;transform:scaleX(1.2529);transform-origin:0 0">"</span></span></div>
<div class="t teal" style="left:365.2px;top:857px;transform:translate(-50%,-50%);font-size:12px;line-height:14px;;font-weight:bold"><span style="display:inline-block;width:42.80px;font-size:11.22px"><span style="display:inline-block;white-space:pre;transform:scaleX(1.0399);transform-origin:0 0">%M20.1</span></span></div>
<div class="t " style="left:365.5px;top:871.5px;transform:translate(-50%,-50%);font-size:12px;line-height:14px;"><span style="display:inline-block;width:4.99px;font-size:11.22px"><span style="display:inline-block;white-space:pre;transform:scaleX(1.2529);transform-origin:0 0">"</span></span>运行中<span style="display:inline-block;width:4.99px;font-size:11.22px"><span style="display:inline-block;white-space:pre;transform:scaleX(1.2529);transform-origin:0 0">"</span></span></div>
</body></html>
